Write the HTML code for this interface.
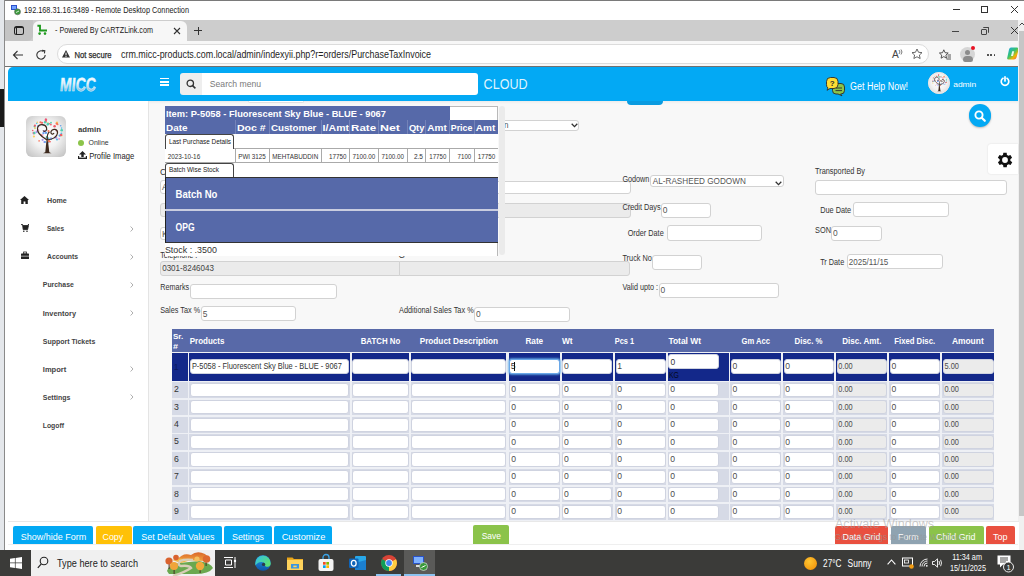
<!DOCTYPE html>
<html><head><meta charset="utf-8"><title>MICC</title><style>
*{box-sizing:border-box;margin:0;padding:0}
html,body{width:1024px;height:576px;overflow:hidden;background:#fff;font-family:"Liberation Sans",sans-serif;position:relative}
.a{position:absolute}
.t{position:absolute;white-space:nowrap;line-height:1;transform-origin:0 0}
svg{position:absolute;overflow:visible}
.tx{left:0;top:0;font-family:"Liberation Sans",sans-serif;pointer-events:none}
</style></head><body>
<div class="a" style="left:0px;top:0px;width:5.00px;height:576.00px;background:#e4e7eb"></div>
<div class="a" style="left:0px;top:89px;width:5.00px;height:38.00px;background:#1a1a1a"></div>
<div class="a" style="left:4px;top:0px;width:1.00px;height:550.00px;background:#8a8a8a"></div>
<div class="a" style="left:5px;top:0px;width:1019.00px;height:20.00px;background:#fff;border-top:1px solid #7a7a7a"></div>
<svg style="left:11px;top:5px" width="10" height="10" viewBox="0 0 10 10"><rect x="0" y="0" width="6" height="5" fill="#2b4fc9"/><rect x="1" y="1" width="4" height="3" fill="#6fa0ff"/><circle cx="6.5" cy="6.8" r="3" fill="#3a9a3a" stroke="#666" stroke-width=".6"/><path d="M5 7.5 L8 6" stroke="#fff" stroke-width=".8"/></svg>
<svg class="tx" width="1024" height="576" viewBox="0 0 1024 576"><text x="24.00" y="12.70" font-size="8.28" fill="#1a1a1a" textLength="165.00" lengthAdjust="spacingAndGlyphs">192.168.31.16:3489 - Remote Desktop Connection</text></svg>
<div class="a" style="left:953px;top:9px;width:7.00px;height:1.00px;background:#333"></div>
<div class="a" style="left:981px;top:6px;width:7.00px;height:7.00px;border:1px solid #333"></div>
<svg style="left:1011px;top:6px" width="7" height="7" viewBox="0 0 7 7"><path d="M0 0L7 7M7 0L0 7" stroke="#333" stroke-width="1"/></svg>
<div class="a" style="left:5px;top:20px;width:1014.00px;height:21.00px;background:#cdcdcd"></div>
<div class="a" style="left:5px;top:20px;width:28.00px;height:21.00px;background:#c4c4c4;border-radius:0 0 6px 0"></div>
<div class="a" style="left:33px;top:21px;width:154.00px;height:20.00px;background:#f7f7f7;border-radius:6px 6px 0 0"></div>
<div class="a" style="left:13.5px;top:26px;width:10.00px;height:9.00px;border:1.2px solid #222;border-top-width:2.2px;border-radius:2.5px"></div>
<div class="a" style="left:15.6px;top:28px;width:1.10px;height:6.00px;background:#222"></div>
<svg style="left:37px;top:24px" width="11" height="12" viewBox="0 0 11 12"><path d="M0.4 1.7H3V6.5H10" fill="none" stroke="#1f9a1f" stroke-width="1.9"/><circle cx="2.6" cy="9.6" r="1.3" fill="#1f9a1f"/><circle cx="8" cy="9.6" r="1.3" fill="#1f9a1f"/></svg>
<svg class="tx" width="1024" height="576" viewBox="0 0 1024 576"><text x="55.00" y="33.00" font-size="8.14" fill="#1a1a1a" textLength="98.00" lengthAdjust="spacingAndGlyphs">- Powered By CARTZLink.com</text></svg>
<svg style="left:174px;top:28px" width="6" height="6" viewBox="0 0 6 6"><path d="M0 0L6 6M6 0L0 6" stroke="#333" stroke-width="1.1"/></svg>
<div class="a" style="left:194px;top:30px;width:8.00px;height:1.00px;background:#333"></div>
<div class="a" style="left:197.5px;top:26.5px;width:1.00px;height:8.00px;background:#333"></div>
<div class="a" style="left:952px;top:31px;width:7.00px;height:1.00px;background:#444"></div>
<div class="a" style="left:981px;top:29px;width:6.00px;height:6.00px;border:1px solid #444;border-radius:1px"></div>
<div class="a" style="left:983px;top:27px;width:6.00px;height:6.00px;border-top:1px solid #444;border-right:1px solid #444;border-radius:1px"></div>
<svg style="left:1011px;top:27px" width="7" height="7" viewBox="0 0 7 7"><path d="M0 0L7 7M7 0L0 7" stroke="#333" stroke-width="1"/></svg>
<div class="a" style="left:5px;top:41px;width:1014.00px;height:25.00px;background:#f7f7f7"></div>
<div class="a" style="left:5px;top:66px;width:1013.00px;height:1.00px;background:#707070"></div>
<svg style="left:12px;top:50px" width="12" height="10" viewBox="0 0 12 10"><path d="M11 5H1.5M5.5 1L1.5 5L5.5 9" fill="none" stroke="#333" stroke-width="1.1"/></svg>
<svg style="left:35px;top:49px" width="12" height="12" viewBox="0 0 12 12"><path d="M10.2 6A4.2 4.2 0 1 1 8.5 2.6" fill="none" stroke="#333" stroke-width="1.1"/><path d="M7 1.2L9.8 1.6L9.4 4.4" fill="none" stroke="#333" stroke-width="1.1"/></svg>
<div class="a" style="left:57px;top:44px;width:872.00px;height:20.20px;background:#fff;border:1px solid #dcdcdc;border-radius:10px"></div>
<svg style="left:62px;top:49.5px" width="8" height="8" viewBox="0 0 8 8"><path d="M4 0L8 7.6H0Z" fill="#333"/><rect x="3.5" y="2.6" width="1" height="2.8" fill="#fff"/><rect x="3.5" y="6" width="1" height="0.9" fill="#fff"/></svg>
<svg class="tx" width="1024" height="576" viewBox="0 0 1024 576"><text x="74.50" y="58.00" font-size="9.16" fill="#2a2a2a" textLength="37.00" lengthAdjust="spacingAndGlyphs" stroke="#2a2a2a" stroke-width=".25">Not secure</text><text x="121.00" y="58.10" font-size="10.61" fill="#1e1e1e" textLength="310.00" lengthAdjust="spacingAndGlyphs">crm.micc-products.com.local/admin/indexyii.php?r=orders/PurchaseTaxInvoice</text><text x="892.00" y="58.00" font-size="10.17" fill="#444">A</text></svg>
<svg style="left:898px;top:49px" width="5" height="6" viewBox="0 0 5 6"><path d="M1 1Q3 3 1 5M3 0.5Q5 3 3 5.5" fill="none" stroke="#444" stroke-width=".7"/></svg>
<svg style="left:911px;top:48px" width="12" height="12" viewBox="0 0 24 24"><path d="M12 2l3 6.5 7 .8-5.2 4.8 1.5 7L12 17.5 5.7 21l1.5-7L2 9.3l7-.8z" fill="none" stroke="#444" stroke-width="1.6" stroke-linejoin="round"/></svg>
<svg style="left:939px;top:48.5px" width="12" height="11" viewBox="0 0 12 11"><path d="M4.8 0.8L6.1 3.7 9.2 4 6.9 6.1 7.5 9.2 4.8 7.6 2.1 9.2 2.7 6.1 0.4 4 3.5 3.7Z" fill="none" stroke="#444" stroke-width=".9" stroke-linejoin="round"/><path d="M8.5 6H12M8.5 8H12M7.5 10H12" stroke="#444" stroke-width=".9"/></svg>
<div class="a" style="left:960px;top:47px;width:15.00px;height:15.00px;background:#d6d6d6;border-radius:50%"></div>
<div class="a" style="left:965px;top:49.5px;width:5.00px;height:5.00px;background:#8c8c8c;border-radius:50%"></div>
<div class="a" style="left:962.5px;top:55.5px;width:10.00px;height:6.50px;background:#8c8c8c;border-radius:5px 5px 3px 3px"></div>
<div class="a" style="left:971px;top:46px;width:4.00px;height:4.00px;background:#e81123;border-radius:50%"></div>
<div class="a" style="left:987.0px;top:54px;width:1.60px;height:1.60px;background:#333;border-radius:50%"></div>
<div class="a" style="left:990.3px;top:54px;width:1.60px;height:1.60px;background:#333;border-radius:50%"></div>
<div class="a" style="left:993.6px;top:54px;width:1.60px;height:1.60px;background:#333;border-radius:50%"></div>
<svg style="left:1007px;top:47px" width="12" height="13" viewBox="0 0 12 13"><defs><linearGradient id="cp1" x1="0" y1="0" x2="1" y2="1"><stop offset="0" stop-color="#1fa0f0"/><stop offset=".45" stop-color="#36c46a"/><stop offset=".7" stop-color="#f4b400"/><stop offset="1" stop-color="#e8367a"/></linearGradient></defs><path d="M4 0.5H10Q12 0.5 11.5 3L9.5 10.5Q9 12.5 7 12.5H1.5Q-0.3 12.5 0.3 10.5L2 2.5Q2.5 0.5 4 0.5Z" fill="url(#cp1)"/><path d="M5.2 4.2H7.2L6 9H4Z" fill="#fff" opacity=".9"/></svg>
<div class="a" style="left:1018px;top:20px;width:6.00px;height:530.00px;background:#f0f0f0"></div>
<div class="a" style="left:1019px;top:31px;width:5.00px;height:484.50px;background:#c6c6c6"></div>
<svg style="left:1019px;top:22px" width="5" height="5" viewBox="0 0 5 5"><path d="M0.5 3.5L3 1L5.5 3.5" fill="none" stroke="#444" stroke-width="1"/></svg>
<div class="a" style="left:8px;top:67px;width:1010.00px;height:34.00px;background:#03a9f4;border-radius:5px 0 0 0"></div>
<svg style="left:0;top:0" width="1024" height="576" class="tx"><defs><linearGradient id="mg" x1="0" y1="0" x2="0" y2="1"><stop offset="0" stop-color="#ffffff"/><stop offset=".45" stop-color="#e6f4fb"/><stop offset="1" stop-color="#4fa6d3"/></linearGradient></defs><text x="59.5" y="90.8" font-size="19" font-weight="bold" textLength="36" lengthAdjust="spacingAndGlyphs" fill="url(#mg)" stroke="#dff2fb" stroke-width=".5" transform="translate(0 90.8) skewX(-5) translate(0 -90.8)" style="font-family:Liberation Sans">MICC</text></svg>
<div class="a" style="left:160px;top:78.2px;width:9.00px;height:1.30px;background:#fff"></div>
<div class="a" style="left:160px;top:81.3px;width:9.00px;height:1.30px;background:#fff"></div>
<div class="a" style="left:160px;top:84.4px;width:9.00px;height:1.30px;background:#fff"></div>
<div class="a" style="left:180px;top:72.5px;width:22.00px;height:22.50px;background:#eeeeee;border-radius:3px 0 0 3px"></div>
<svg style="left:186px;top:79px" width="10" height="10" viewBox="0 0 10 10"><circle cx="4.3" cy="4.3" r="3.2" fill="none" stroke="#333" stroke-width="1.3"/><path d="M6.6 6.6L9.4 9.4" stroke="#333" stroke-width="1.5"/></svg>
<div class="a" style="left:202px;top:72.5px;width:276.30px;height:22.50px;background:#fff;border-radius:0 3px 3px 0"></div>
<svg class="tx" width="1024" height="576" viewBox="0 0 1024 576"><text x="209.80" y="86.70" font-size="9.16" fill="#7a7a7a" textLength="51.30" lengthAdjust="spacingAndGlyphs">Search menu</text><text x="483.60" y="89.00" font-size="14.24" fill="#dff3fd" textLength="43.99" lengthAdjust="spacingAndGlyphs">CLOUD</text></svg>
<svg style="left:826px;top:77px" width="19" height="19" viewBox="0 0 19 19"><path d="M10 6.5h5a3.5 3.5 0 0 1 3.5 3.5v3.5a3.5 3.5 0 0 1-3.5 3.5h-0.5l1.5 1.8-4-1.8H10a3.5 3.5 0 0 1-3.5-3.5V10A3.5 3.5 0 0 1 10 6.5z" fill="#8bc34a" stroke="#2b2b2b" stroke-width=".9"/><path d="M9.5 11h6.5M9.5 13.6h6.5" stroke="#2b2b2b" stroke-width=".9"/><path d="M4.5 0.5h3.5a4 4 0 0 1 4 4v3a4 4 0 0 1-4 4H4l-3 1.8 1-2.3A4 4 0 0 1 0.5 7.5v-3a4 4 0 0 1 4-4z" fill="#ffdd33" stroke="#2b2b2b" stroke-width=".9"/><text x="6.2" y="9" font-size="8" font-weight="bold" text-anchor="middle" fill="#2b2b2b" font-family="Liberation Sans">?</text></svg>
<svg class="tx" width="1024" height="576" viewBox="0 0 1024 576"><text x="850.10" y="90.00" font-size="10.61" fill="#fff" textLength="58.00" lengthAdjust="spacingAndGlyphs">Get Help Now!</text></svg>
<div class="a" style="left:927.5px;top:72.3px;width:22.00px;height:22.00px;background:#f2f2f2;border-radius:50%;border:1px solid #c9c9c9"></div>
<svg class="tx" width="1024" height="576" viewBox="0 0 1024 576"><text x="953.20" y="86.80" font-size="7.56" fill="#fff" textLength="23.00" lengthAdjust="spacingAndGlyphs">admin</text></svg>
<svg style="left:1000px;top:75.5px" width="10" height="10" viewBox="0 0 10 10"><path d="M3 2.3A3.8 3.8 0 1 0 7 2.3" fill="none" stroke="#fff" stroke-width="1.7" stroke-linecap="round"/><path d="M5 0.8V5" stroke="#fff" stroke-width="1.7" stroke-linecap="round"/></svg>
<div class="a" style="left:8px;top:101px;width:141.00px;height:420.00px;background:#fff;border-right:1px solid #e4e4e4"></div>
<div class="a" style="left:149px;top:101px;width:869.00px;height:420.00px;background:#f8f8f8"></div>
<div class="a" style="left:149px;top:101px;width:869.00px;height:3.00px;background:linear-gradient(rgba(0,0,0,.05),rgba(0,0,0,0))"></div>
<div class="a" style="left:8px;top:521px;width:1011.00px;height:29.00px;background:#fff;border-top:1px solid #e8e8e8"></div>
<div class="a" style="left:0px;top:550px;width:1024.00px;height:26.00px;background:#3b3b39"></div>
<div class="a" style="left:25.6px;top:116px;width:40.7px;height:40.7px;border-radius:6px;background:radial-gradient(circle at 50% 45%,#ffffff 0%,#f2f2f2 45%,#bdbdbd 100%)"></div>
<svg style="left:25.6px;top:116px" width="41" height="41" viewBox="0 0 41 41"><g opacity=".95"><circle cx="16.0" cy="6.8" r="1.1" fill="#ed5565"/><circle cx="24.1" cy="25.7" r="0.8" fill="#ed5565"/><circle cx="19.4" cy="4.7" r="0.8" fill="#ec87c0"/><circle cx="7.8" cy="17.1" r="1.3" fill="#e94e77"/><circle cx="35.4" cy="17.4" r="0.9" fill="#4fc1e9"/><circle cx="15.0" cy="6.6" r="0.8" fill="#fc6e51"/><circle cx="23.7" cy="7.7" r="0.8" fill="#ed5565"/><circle cx="22.5" cy="22.4" r="1.0" fill="#ffce54"/><circle cx="17.2" cy="9.2" r="0.8" fill="#4fc1e9"/><circle cx="8.5" cy="10.5" r="1.0" fill="#48cfad"/><circle cx="28.6" cy="10.2" r="1.3" fill="#ed5565"/><circle cx="21.9" cy="7.1" r="0.9" fill="#ffce54"/><circle cx="8.4" cy="17.0" r="1.2" fill="#48cfad"/><circle cx="8.9" cy="9.7" r="1.1" fill="#ed5565"/><circle cx="7.9" cy="20.5" r="1.1" fill="#ffce54"/><circle cx="6.7" cy="14.5" r="0.8" fill="#ed5565"/><circle cx="21.3" cy="8.5" r="0.9" fill="#4fc1e9"/><circle cx="18.3" cy="25.9" r="1.0" fill="#ac92ec"/><circle cx="19.9" cy="16.7" r="1.2" fill="#5d9cec"/><circle cx="10.7" cy="7.4" r="0.8" fill="#4fc1e9"/><circle cx="11.7" cy="10.0" r="0.8" fill="#5d9cec"/><circle cx="17.4" cy="17.2" r="1.1" fill="#5d9cec"/><circle cx="35.5" cy="19.4" r="1.1" fill="#ffce54"/><circle cx="33.1" cy="22.9" r="0.9" fill="#ec87c0"/><circle cx="19.7" cy="5.7" r="1.1" fill="#ed5565"/><circle cx="9.1" cy="12.1" r="0.7" fill="#4fc1e9"/><circle cx="25.0" cy="6.7" r="0.9" fill="#48cfad"/><circle cx="29.2" cy="21.5" r="1.0" fill="#ac92ec"/><circle cx="22.0" cy="8.1" r="1.3" fill="#48cfad"/><circle cx="10.5" cy="16.6" r="0.7" fill="#5d9cec"/><circle cx="15.2" cy="19.1" r="0.8" fill="#fc6e51"/><circle cx="22.1" cy="25.7" r="0.9" fill="#4fc1e9"/><circle cx="22.5" cy="22.5" r="0.9" fill="#4fc1e9"/><circle cx="25.0" cy="22.7" r="1.2" fill="#4fc1e9"/><circle cx="31.0" cy="23.5" r="1.1" fill="#4fc1e9"/><circle cx="12.2" cy="15.3" r="1.1" fill="#a0d468"/><circle cx="30.5" cy="14.8" r="0.8" fill="#e94e77"/><circle cx="35.7" cy="14.2" r="1.3" fill="#48cfad"/><circle cx="35.6" cy="12.1" r="0.8" fill="#4fc1e9"/><circle cx="16.7" cy="19.1" r="0.8" fill="#ec87c0"/><circle cx="30.3" cy="21.8" r="1.0" fill="#ac92ec"/><circle cx="20.4" cy="21.6" r="0.8" fill="#ac92ec"/><circle cx="11.3" cy="6.2" r="0.8" fill="#ffce54"/><circle cx="31.0" cy="6.7" r="1.2" fill="#ffce54"/><circle cx="22.3" cy="26.3" r="1.0" fill="#4fc1e9"/><circle cx="31.6" cy="8.3" r="0.9" fill="#fc6e51"/><circle cx="21.5" cy="22.1" r="0.9" fill="#5d9cec"/><circle cx="19.0" cy="6.3" r="1.2" fill="#48cfad"/><circle cx="33.8" cy="19.6" r="1.2" fill="#5d9cec"/><circle cx="19.0" cy="25.9" r="1.0" fill="#5d9cec"/><circle cx="10.7" cy="15.8" r="1.2" fill="#ac92ec"/><circle cx="24.9" cy="22.4" r="0.8" fill="#ac92ec"/><circle cx="20.7" cy="21.1" r="1.0" fill="#48cfad"/><circle cx="20.0" cy="3.7" r="1.2" fill="#ed5565"/><circle cx="22.5" cy="15.0" r="1.1" fill="#fc6e51"/><circle cx="12.3" cy="14.2" r="0.9" fill="#ec87c0"/><circle cx="19.7" cy="4.8" r="0.8" fill="#ed5565"/><circle cx="12.6" cy="10.6" r="0.8" fill="#ac92ec"/><circle cx="35.1" cy="19.1" r="0.9" fill="#fc6e51"/><circle cx="18.3" cy="15.2" r="1.2" fill="#ac92ec"/><circle cx="8.9" cy="12.1" r="0.9" fill="#ffce54"/><circle cx="19.7" cy="3.5" r="0.9" fill="#e94e77"/><circle cx="13.1" cy="24.9" r="0.8" fill="#fc6e51"/><circle cx="14.4" cy="6.2" r="1.0" fill="#fc6e51"/><circle cx="30.8" cy="7.6" r="1.2" fill="#fc6e51"/><circle cx="35.1" cy="18.9" r="1.2" fill="#ed5565"/><circle cx="24.9" cy="8.6" r="0.9" fill="#ed5565"/><circle cx="34.7" cy="9.7" r="0.8" fill="#5d9cec"/><circle cx="22.9" cy="25.2" r="1.3" fill="#fc6e51"/><circle cx="16.6" cy="23.8" r="1.1" fill="#ac92ec"/></g>
<path d="M19.2 37 L20.2 27 L21 22 L22.2 27 L23.4 37 Z" fill="#3e2a1e"/>
<path d="M21 24 C16 21 10.5 17 11.5 12 C12.5 7.5 19 7.5 20.5 11.5 C21.5 14.5 18.5 16.5 17 14.5 M21 24 C25 23.5 31 21.5 31.5 17 C32 13 26.5 12 25 15.5 C24.2 18 27 19 28 17 M21.3 24 C21 20 21.5 17 23.5 16" fill="none" stroke="#3e2a1e" stroke-width="1.2"/>
<path d="M17 37.2 Q21 35 25.5 37.2 Z" fill="#3e2a1e"/></svg>
<svg class="tx" width="1024" height="576" viewBox="0 0 1024 576"><text x="78.00" y="132.30" font-size="7.56" fill="#3a3a3a" font-weight="bold" textLength="23.00" lengthAdjust="spacingAndGlyphs">admin</text></svg>
<div class="a" style="left:78.2px;top:139.6px;width:6.00px;height:6.00px;background:#8cc44a;border-radius:50%"></div>
<svg class="tx" width="1024" height="576" viewBox="0 0 1024 576"><text x="88.60" y="145.20" font-size="7.27" fill="#333" textLength="20.00" lengthAdjust="spacingAndGlyphs">Online</text></svg>
<svg style="left:78px;top:151px" width="9" height="8" viewBox="0 0 9 8"><path d="M4.5 0L8 3.5H5.7V6H3.3V3.5H1Z" fill="#222"/><rect x="0" y="6.6" width="9" height="1.4" fill="#222"/><rect x="0" y="5" width="1.2" height="3" fill="#222"/><rect x="7.8" y="5" width="1.2" height="3" fill="#222"/></svg>
<svg class="tx" width="1024" height="576" viewBox="0 0 1024 576"><text x="89.20" y="158.70" font-size="8.58" fill="#222" textLength="45.00" lengthAdjust="spacingAndGlyphs">Profile Image</text></svg>
<svg style="left:20.2px;top:195.6px" width="9" height="8" viewBox="0 0 9 8"><path d="M4.5 0L9 4H7.8V8H5.4V5.6H3.6V8H1.2V4H0Z" fill="#222"/></svg>
<svg style="left:21px;top:224.4px" width="8" height="8" viewBox="0 0 8 8"><path d="M0 0.6H1.6L2.2 5.6H6.6L7.4 1.6H2" fill="#222" stroke="#222" stroke-width=".9"/><path d="M7.6 0L7 1.6" stroke="#222" stroke-width="1"/><circle cx="2.8" cy="7.2" r=".8" fill="#222"/><circle cx="6" cy="7.2" r=".8" fill="#222"/></svg>
<svg style="left:21px;top:252.2px" width="8" height="7" viewBox="0 0 8 7"><rect x="0" y="1.6" width="8" height="5.4" rx=".6" fill="#222"/><rect x="2.6" y="0" width="2.8" height="2" fill="none" stroke="#222" stroke-width=".8"/><rect x="0" y="3.8" width="8" height=".6" fill="#fff"/></svg>
<svg class="tx" width="1024" height="576" viewBox="0 0 1024 576"><text x="47.00" y="203.10" font-size="7.85" fill="#444" font-weight="bold" textLength="19.80" lengthAdjust="spacingAndGlyphs">Home</text><text x="47.00" y="231.20" font-size="7.85" fill="#444" font-weight="bold" textLength="17.00" lengthAdjust="spacingAndGlyphs">Sales</text></svg>
<svg style="left:129.5px;top:225.5px" width="4" height="6" viewBox="0 0 4 6"><path d="M0.6 0.5L3 3L0.6 5.5" fill="none" stroke="#999" stroke-width=".8"/></svg>
<svg class="tx" width="1024" height="576" viewBox="0 0 1024 576"><text x="47.00" y="259.30" font-size="7.85" fill="#444" font-weight="bold" textLength="31.00" lengthAdjust="spacingAndGlyphs">Accounts</text></svg>
<svg style="left:129.5px;top:253.6px" width="4" height="6" viewBox="0 0 4 6"><path d="M0.6 0.5L3 3L0.6 5.5" fill="none" stroke="#999" stroke-width=".8"/></svg>
<svg class="tx" width="1024" height="576" viewBox="0 0 1024 576"><text x="42.80" y="287.40" font-size="7.85" fill="#444" font-weight="bold" textLength="31.00" lengthAdjust="spacingAndGlyphs">Purchase</text></svg>
<svg style="left:129.5px;top:281.7px" width="4" height="6" viewBox="0 0 4 6"><path d="M0.6 0.5L3 3L0.6 5.5" fill="none" stroke="#999" stroke-width=".8"/></svg>
<svg class="tx" width="1024" height="576" viewBox="0 0 1024 576"><text x="42.80" y="315.50" font-size="7.85" fill="#444" font-weight="bold" textLength="33.20" lengthAdjust="spacingAndGlyphs">Inventory</text></svg>
<svg style="left:129.5px;top:309.8px" width="4" height="6" viewBox="0 0 4 6"><path d="M0.6 0.5L3 3L0.6 5.5" fill="none" stroke="#999" stroke-width=".8"/></svg>
<svg class="tx" width="1024" height="576" viewBox="0 0 1024 576"><text x="42.80" y="343.60" font-size="7.85" fill="#444" font-weight="bold" textLength="52.50" lengthAdjust="spacingAndGlyphs">Support Tickets</text><text x="42.80" y="371.80" font-size="7.85" fill="#444" font-weight="bold" textLength="23.50" lengthAdjust="spacingAndGlyphs">Import</text></svg>
<svg style="left:129.5px;top:366.1px" width="4" height="6" viewBox="0 0 4 6"><path d="M0.6 0.5L3 3L0.6 5.5" fill="none" stroke="#999" stroke-width=".8"/></svg>
<svg class="tx" width="1024" height="576" viewBox="0 0 1024 576"><text x="42.80" y="399.90" font-size="7.85" fill="#444" font-weight="bold" textLength="27.50" lengthAdjust="spacingAndGlyphs">Settings</text></svg>
<svg style="left:129.5px;top:394.2px" width="4" height="6" viewBox="0 0 4 6"><path d="M0.6 0.5L3 3L0.6 5.5" fill="none" stroke="#999" stroke-width=".8"/></svg>
<svg class="tx" width="1024" height="576" viewBox="0 0 1024 576"><text x="42.80" y="428.00" font-size="7.85" fill="#444" font-weight="bold" textLength="21.19" lengthAdjust="spacingAndGlyphs">Logoff</text></svg>
<div class="a" style="left:247.5px;top:101px;width:56.50px;height:2.00px;background:#fff;border:1px solid #e0e0e0;border-top:none;border-radius:0 0 4px 4px"></div>
<div class="a" style="left:627.2px;top:101px;width:36.20px;height:3.50px;background:#0a9be0;border-radius:0 0 4px 4px"></div>
<svg class="tx" width="1024" height="576" viewBox="0 0 1024 576"><text x="160.00" y="174.50" font-size="8.72" fill="#333">C</text></svg>
<div class="a" style="left:160px;top:179.8px;width:239.00px;height:14.60px;background:#fff;border:1px solid #d2d2d2;border-radius:3px;"></div>
<svg class="tx" width="1024" height="576" viewBox="0 0 1024 576"><text x="162.00" y="190.00" font-size="8.72" fill="#555">A</text></svg>
<div class="a" style="left:160px;top:202.7px;width:239.00px;height:14.60px;background:#ebebeb;border:1px solid #d2d2d2;border-radius:3px;"></div>
<div class="a" style="left:160px;top:226.7px;width:239.00px;height:13.50px;background:#fff;border:1px solid #d2d2d2;border-radius:3px;"></div>
<svg class="tx" width="1024" height="576" viewBox="0 0 1024 576"><text x="162.00" y="236.50" font-size="8.72" fill="#555">K</text><text x="160.20" y="258.00" font-size="8.72" fill="#333" textLength="37.00" lengthAdjust="spacingAndGlyphs">Telephone :</text></svg>
<div class="a" style="left:160.2px;top:260.6px;width:239.60px;height:15.00px;background:#ebebeb;border:1px solid #d2d2d2;border-radius:3px;border-radius:3px 0 0 3px"></div>
<svg class="tx" width="1024" height="576" viewBox="0 0 1024 576"><text x="162.20" y="270.80" font-size="9.01" fill="#444" textLength="51.80" lengthAdjust="spacingAndGlyphs">0301-8246043</text></svg>
<div class="a" style="left:399.3px;top:260.6px;width:231.20px;height:15.00px;background:#ebebeb;border:1px solid #d2d2d2;border-radius:3px;border-radius:0 3px 3px 0"></div>
<svg class="tx" width="1024" height="576" viewBox="0 0 1024 576"><text x="398.50" y="258.00" font-size="8.72" fill="#333">C</text><text x="160.20" y="289.70" font-size="8.14" fill="#333" textLength="29.00" lengthAdjust="spacingAndGlyphs">Remarks</text></svg>
<div class="a" style="left:189.8px;top:283.75px;width:147.70px;height:14.85px;background:#fff;border:1px solid #d2d2d2;border-radius:3px;"></div>
<svg class="tx" width="1024" height="576" viewBox="0 0 1024 576"><text x="160.20" y="313.00" font-size="8.43" fill="#333" textLength="40.00" lengthAdjust="spacingAndGlyphs">Sales Tax %</text></svg>
<div class="a" style="left:200.8px;top:306.4px;width:95.20px;height:14.85px;background:#fff;border:1px solid #d2d2d2;border-radius:3px;"></div>
<svg class="tx" width="1024" height="576" viewBox="0 0 1024 576"><text x="202.80" y="316.60" font-size="8.43" fill="#555">5</text></svg>
<div class="a" style="left:500px;top:119.7px;width:79.40px;height:11.10px;background:#fff;border:1px solid #d2d2d2;border-radius:3px;"></div>
<svg class="tx" width="1024" height="576" viewBox="0 0 1024 576"><text x="504.00" y="128.00" font-size="8.14" fill="#555">n</text></svg>
<svg style="left:571px;top:123px" width="7" height="5" viewBox="0 0 7 5"><path d="M0.7 0.7L3.5 3.6L6.3 0.7" fill="none" stroke="#333" stroke-width="1.3"/></svg>
<div class="a" style="left:399px;top:180.5px;width:231.50px;height:13.50px;background:#fff;border:1px solid #d2d2d2;border-radius:3px;"></div>
<div class="a" style="left:399px;top:202.8px;width:231.50px;height:14.90px;background:#ebebeb;border:1px solid #d2d2d2;border-radius:3px;"></div>
<svg class="tx" width="1024" height="576" viewBox="0 0 1024 576"><text x="399.00" y="313.00" font-size="8.43" fill="#333" textLength="74.70" lengthAdjust="spacingAndGlyphs">Additional Sales Tax %</text></svg>
<div class="a" style="left:473.7px;top:306.6px;width:96.00px;height:15.40px;background:#fff;border:1px solid #d2d2d2;border-radius:3px;"></div>
<svg class="tx" width="1024" height="576" viewBox="0 0 1024 576"><text x="476.00" y="317.10" font-size="8.43" fill="#555">0</text><text x="622.40" y="182.00" font-size="8.58" fill="#333" textLength="27.00" lengthAdjust="spacingAndGlyphs">Godown</text></svg>
<div class="a" style="left:650.1px;top:175.2px;width:133.60px;height:12.30px;background:#fff;border:1px solid #d2d2d2;border-radius:3px;"></div>
<svg class="tx" width="1024" height="576" viewBox="0 0 1024 576"><text x="652.80" y="184.30" font-size="8.87" fill="#555" textLength="93.00" lengthAdjust="spacingAndGlyphs">AL-RASHEED GODOWN</text></svg>
<svg style="left:775px;top:180.5px" width="7" height="5" viewBox="0 0 7 5"><path d="M0.7 0.7L3.5 3.6L6.3 0.7" fill="none" stroke="#333" stroke-width="1.3"/></svg>
<svg class="tx" width="1024" height="576" viewBox="0 0 1024 576"><text x="622.40" y="209.80" font-size="8.58" fill="#333" textLength="38.30" lengthAdjust="spacingAndGlyphs">Credit Days</text></svg>
<div class="a" style="left:660.7px;top:203.3px;width:50.60px;height:14.40px;background:#fff;border:1px solid #d2d2d2;border-radius:3px;"></div>
<svg class="tx" width="1024" height="576" viewBox="0 0 1024 576"><text x="662.80" y="212.80" font-size="8.43" fill="#555">0</text><text x="627.70" y="235.80" font-size="8.58" fill="#333" textLength="36.00" lengthAdjust="spacingAndGlyphs">Order Date</text></svg>
<div class="a" style="left:666.5px;top:225.3px;width:95.20px;height:15.30px;background:#fff;border:1px solid #d2d2d2;border-radius:3px;"></div>
<svg class="tx" width="1024" height="576" viewBox="0 0 1024 576"><text x="622.40" y="261.20" font-size="8.58" fill="#333" textLength="29.50" lengthAdjust="spacingAndGlyphs">Truck No</text></svg>
<div class="a" style="left:651.6px;top:254.7px;width:50.90px;height:14.90px;background:#fff;border:1px solid #d2d2d2;border-radius:3px;"></div>
<svg class="tx" width="1024" height="576" viewBox="0 0 1024 576"><text x="622.40" y="290.30" font-size="8.58" fill="#333" textLength="35.60" lengthAdjust="spacingAndGlyphs">Valid upto :</text></svg>
<div class="a" style="left:658.6px;top:283.3px;width:120.70px;height:15.00px;background:#fff;border:1px solid #d2d2d2;border-radius:3px;"></div>
<svg class="tx" width="1024" height="576" viewBox="0 0 1024 576"><text x="660.50" y="293.30" font-size="8.43" fill="#555">0</text><text x="815.00" y="174.20" font-size="8.58" fill="#333" textLength="50.00" lengthAdjust="spacingAndGlyphs">Transported By</text></svg>
<div class="a" style="left:814.8px;top:180.2px;width:191.90px;height:14.60px;background:#fff;border:1px solid #d2d2d2;border-radius:3px;"></div>
<svg class="tx" width="1024" height="576" viewBox="0 0 1024 576"><text x="820.20" y="213.10" font-size="8.58" fill="#333" textLength="31.00" lengthAdjust="spacingAndGlyphs">Due Date</text></svg>
<div class="a" style="left:853.3px;top:202.3px;width:95.45px;height:15.00px;background:#fff;border:1px solid #d2d2d2;border-radius:3px;"></div>
<svg class="tx" width="1024" height="576" viewBox="0 0 1024 576"><text x="815.00" y="232.90" font-size="8.58" fill="#333" textLength="16.00" lengthAdjust="spacingAndGlyphs">SON</text></svg>
<div class="a" style="left:831px;top:226.25px;width:50.70px;height:14.55px;background:#fff;border:1px solid #d2d2d2;border-radius:3px;"></div>
<svg class="tx" width="1024" height="576" viewBox="0 0 1024 576"><text x="833.00" y="236.00" font-size="8.43" fill="#555">0</text><text x="820.20" y="264.60" font-size="8.58" fill="#333" textLength="24.00" lengthAdjust="spacingAndGlyphs">Tr Date</text></svg>
<div class="a" style="left:847px;top:254.4px;width:95.50px;height:15.00px;background:#fff;border:1px solid #d2d2d2;border-radius:3px;"></div>
<svg class="tx" width="1024" height="576" viewBox="0 0 1024 576"><text x="848.75" y="264.60" font-size="8.72" fill="#555" textLength="39.60" lengthAdjust="spacingAndGlyphs">2025/11/15</text></svg>
<div class="a" style="left:968.5px;top:104px;width:22.50px;height:22.50px;background:#03a9f4;border-radius:50%;box-shadow:0 1px 2px rgba(0,0,0,.25)"></div>
<svg style="left:974px;top:109.5px" width="12" height="12" viewBox="0 0 12 12"><circle cx="5" cy="5" r="3.6" fill="none" stroke="#fff" stroke-width="1.9"/><path d="M7.7 7.7L10.8 10.8" stroke="#fff" stroke-width="2.2" stroke-linecap="round"/></svg>
<div class="a" style="left:988px;top:144px;width:30.00px;height:29.50px;background:#fff;border-radius:3px 0 0 3px;box-shadow:0 0 2px rgba(0,0,0,.12)"></div>
<svg style="left:994.5px;top:149.5px" width="20" height="20" viewBox="0 0 24 24"><path fill="#111" d="M19.4 13a7.8 7.8 0 0 0 0-2l2.1-1.6-2-3.5-2.5 1a7.6 7.6 0 0 0-1.7-1L15 3.2h-4l-.4 2.7a7.6 7.6 0 0 0-1.7 1l-2.5-1-2 3.5L6.6 11a7.8 7.8 0 0 0 0 2l-2.1 1.6 2 3.5 2.5-1a7.6 7.6 0 0 0 1.7 1l.4 2.7h4l.4-2.7a7.6 7.6 0 0 0 1.7-1l2.5 1 2-3.5zM13 15.5a3.5 3.5 0 1 1 0-7 3.5 3.5 0 0 1 0 7z" transform="translate(-1 0)"/></svg>
<div class="a" style="left:164.5px;top:106px;width:333.70px;height:150.00px;background:#fff;border:1px solid #b9b9b9;border-bottom:none;border-left-color:#fff"></div>
<div class="a" style="left:499px;top:106px;width:6.00px;height:149.00px;background:#ebebeb;border-radius:3px"></div>
<div class="a" style="left:165px;top:106px;width:284.50px;height:14.00px;background:#5669a9"></div>
<div class="a" style="left:165px;top:120px;width:333.00px;height:14.00px;background:#5669a9"></div>
<svg class="tx" width="1024" height="576" viewBox="0 0 1024 576"><text x="165.90" y="116.60" font-size="9.45" fill="#fff" font-weight="bold" textLength="220.00" lengthAdjust="spacingAndGlyphs">Item: P-5058 - Fluorescent Sky Blue - BLUE - 9067</text><text x="166.10" y="130.50" font-size="8.43" fill="#fff" font-weight="bold" textLength="21.50" lengthAdjust="spacingAndGlyphs">Date</text></svg>
<div class="a" style="left:234.8px;top:120px;width:1.00px;height:14.00px;background:#7483b8"></div>
<svg class="tx" width="1024" height="576" viewBox="0 0 1024 576"><text x="236.90" y="130.50" font-size="8.43" fill="#fff" font-weight="bold" textLength="28.80" lengthAdjust="spacingAndGlyphs">Doc #</text></svg>
<div class="a" style="left:268.8px;top:120px;width:1.00px;height:14.00px;background:#7483b8"></div>
<svg class="tx" width="1024" height="576" viewBox="0 0 1024 576"><text x="270.90" y="130.50" font-size="8.43" fill="#fff" font-weight="bold" textLength="45.50" lengthAdjust="spacingAndGlyphs">Customer</text></svg>
<div class="a" style="left:320.5px;top:120px;width:1.00px;height:14.00px;background:#7483b8"></div>
<svg class="tx" width="1024" height="576" viewBox="0 0 1024 576"><text x="322.60" y="130.50" font-size="8.43" fill="#fff" font-weight="bold" textLength="26.50" lengthAdjust="spacingAndGlyphs">I/Amt</text></svg>
<div class="a" style="left:349.0px;top:120px;width:1.00px;height:14.00px;background:#7483b8"></div>
<svg class="tx" width="1024" height="576" viewBox="0 0 1024 576"><text x="351.10" y="130.50" font-size="8.43" fill="#fff" font-weight="bold" textLength="24.99" lengthAdjust="spacingAndGlyphs">Rate</text></svg>
<div class="a" style="left:377.9px;top:120px;width:1.00px;height:14.00px;background:#7483b8"></div>
<svg class="tx" width="1024" height="576" viewBox="0 0 1024 576"><text x="380.00" y="130.50" font-size="8.43" fill="#fff" font-weight="bold" textLength="20.00" lengthAdjust="spacingAndGlyphs">Net</text></svg>
<div class="a" style="left:406.8px;top:120px;width:1.00px;height:14.00px;background:#7483b8"></div>
<svg class="tx" width="1024" height="576" viewBox="0 0 1024 576"><text x="408.90" y="130.50" font-size="8.43" fill="#fff" font-weight="bold" textLength="15.50" lengthAdjust="spacingAndGlyphs">Qty</text></svg>
<div class="a" style="left:425.2px;top:120px;width:1.00px;height:14.00px;background:#7483b8"></div>
<svg class="tx" width="1024" height="576" viewBox="0 0 1024 576"><text x="427.30" y="130.50" font-size="8.43" fill="#fff" font-weight="bold" textLength="19.50" lengthAdjust="spacingAndGlyphs">Amt</text></svg>
<div class="a" style="left:448.7px;top:120px;width:1.00px;height:14.00px;background:#7483b8"></div>
<svg class="tx" width="1024" height="576" viewBox="0 0 1024 576"><text x="450.80" y="130.50" font-size="8.43" fill="#fff" font-weight="bold" textLength="21.50" lengthAdjust="spacingAndGlyphs">Price</text></svg>
<div class="a" style="left:473.7px;top:120px;width:1.00px;height:14.00px;background:#7483b8"></div>
<svg class="tx" width="1024" height="576" viewBox="0 0 1024 576"><text x="475.80" y="130.50" font-size="8.43" fill="#fff" font-weight="bold" textLength="19.50" lengthAdjust="spacingAndGlyphs">Amt</text></svg>
<div class="a" style="left:165px;top:134px;width:333.00px;height:15.00px;background:#fff;border-bottom:1px solid #aaa"></div>
<div class="a" style="left:165.4px;top:134.3px;width:69.00px;height:14.30px;background:#fff;border:1px solid #444;border-bottom:none;border-radius:3px 3px 0 0;border-width:1.5px 1px 0 1px"></div>
<svg class="tx" width="1024" height="576" viewBox="0 0 1024 576"><text x="168.90" y="143.75" font-size="6.40" fill="#222">Last Purchase Details</text></svg>
<div class="a" style="left:165px;top:149px;width:333.00px;height:13.50px;background:#fff;border-bottom:1px solid #aaa"></div>
<svg class="tx" width="1024" height="576" viewBox="0 0 1024 576"><text x="167.70" y="158.50" font-size="7.27" fill="#333" textLength="32.50" lengthAdjust="spacingAndGlyphs">2023-10-16</text></svg>
<div class="a" style="left:234.8px;top:149px;width:1.00px;height:13.50px;background:#aaa"></div>
<svg class="tx" width="1024" height="576" viewBox="0 0 1024 576"><text x="238.25" y="158.50" font-size="7.27" fill="#333" textLength="27.40" lengthAdjust="spacingAndGlyphs">PWI 3125</text></svg>
<div class="a" style="left:268.8px;top:149px;width:1.00px;height:13.50px;background:#aaa"></div>
<svg class="tx" width="1024" height="576" viewBox="0 0 1024 576"><text x="272.30" y="158.50" font-size="7.27" fill="#333" textLength="45.90" lengthAdjust="spacingAndGlyphs">MEHTABUDDIN</text></svg>
<div class="a" style="left:320.5px;top:149px;width:1.00px;height:13.50px;background:#aaa"></div>
<svg class="tx" width="1024" height="576" viewBox="0 0 1024 576"><text x="329.10" y="158.50" font-size="7.27" fill="#333" textLength="17.50" lengthAdjust="spacingAndGlyphs">17750</text></svg>
<div class="a" style="left:349.0px;top:149px;width:1.00px;height:13.50px;background:#aaa"></div>
<svg class="tx" width="1024" height="576" viewBox="0 0 1024 576"><text x="352.40" y="158.50" font-size="7.27" fill="#333" textLength="22.80" lengthAdjust="spacingAndGlyphs">7100.00</text></svg>
<div class="a" style="left:377.9px;top:149px;width:1.00px;height:13.50px;background:#aaa"></div>
<svg class="tx" width="1024" height="576" viewBox="0 0 1024 576"><text x="381.50" y="158.50" font-size="7.27" fill="#333" textLength="22.40" lengthAdjust="spacingAndGlyphs">7100.00</text></svg>
<div class="a" style="left:406.8px;top:149px;width:1.00px;height:13.50px;background:#aaa"></div>
<svg class="tx" width="1024" height="576" viewBox="0 0 1024 576"><text x="413.90" y="158.50" font-size="7.27" fill="#333" textLength="9.10" lengthAdjust="spacingAndGlyphs">2.5</text></svg>
<div class="a" style="left:425.2px;top:149px;width:1.00px;height:13.50px;background:#aaa"></div>
<svg class="tx" width="1024" height="576" viewBox="0 0 1024 576"><text x="429.30" y="158.50" font-size="7.27" fill="#333" textLength="17.00" lengthAdjust="spacingAndGlyphs">17750</text></svg>
<div class="a" style="left:448.7px;top:149px;width:1.00px;height:13.50px;background:#aaa"></div>
<svg class="tx" width="1024" height="576" viewBox="0 0 1024 576"><text x="457.60" y="158.50" font-size="7.27" fill="#333" textLength="13.60" lengthAdjust="spacingAndGlyphs">7100</text></svg>
<div class="a" style="left:473.7px;top:149px;width:1.00px;height:13.50px;background:#aaa"></div>
<svg class="tx" width="1024" height="576" viewBox="0 0 1024 576"><text x="477.80" y="158.50" font-size="7.27" fill="#333" textLength="17.50" lengthAdjust="spacingAndGlyphs">17750</text></svg>
<div class="a" style="left:165px;top:162.5px;width:333.00px;height:14.50px;background:#fff"></div>
<div class="a" style="left:165.4px;top:162.8px;width:69.00px;height:14.20px;background:#fff;border:1px solid #444;border-bottom:none;border-radius:3px 3px 0 0;border-width:1.5px 1px 0 1px"></div>
<svg class="tx" width="1024" height="576" viewBox="0 0 1024 576"><text x="168.90" y="171.50" font-size="6.40" fill="#222">Batch Wise Stock</text></svg>
<div class="a" style="left:164.5px;top:177.4px;width:333.70px;height:31.20px;background:#5669a9;border-left:1.5px solid #222;border-top:1px solid #333"></div>
<div class="a" style="left:164.5px;top:208.6px;width:333.70px;height:2.40px;background:#c9cde0"></div>
<div class="a" style="left:164.5px;top:211px;width:333.70px;height:31.60px;background:#5669a9;border-left:1.5px solid #222;border-bottom:1px solid #333"></div>
<svg class="tx" width="1024" height="576" viewBox="0 0 1024 576"><text x="175.60" y="198.00" font-size="10.17" fill="#fff" font-weight="bold" textLength="41.80" lengthAdjust="spacingAndGlyphs">Batch No</text><text x="175.60" y="230.60" font-size="10.17" fill="#fff" font-weight="bold" textLength="19.00" lengthAdjust="spacingAndGlyphs">OPG</text><text x="164.90" y="253.30" font-size="9.59" fill="#333" textLength="52.00" lengthAdjust="spacingAndGlyphs">Stock : .3500</text></svg>
<div class="a" style="left:171.9px;top:329.4px;width:822.50px;height:22.30px;background:#5869a8"></div>
<svg class="tx" width="1024" height="576" viewBox="0 0 1024 576"><text x="172.90" y="338.70" font-size="7.99" fill="#fff" font-weight="bold">Sr.</text><text x="173.00" y="349.40" font-size="7.85" fill="#fff" font-weight="bold" textLength="5.00" lengthAdjust="spacingAndGlyphs">#</text><text x="189.70" y="343.80" font-size="8.14" fill="#fff" font-weight="bold" textLength="34.70" lengthAdjust="spacingAndGlyphs">Products</text><text x="360.70" y="343.80" font-size="8.14" fill="#fff" font-weight="bold" textLength="39.50" lengthAdjust="spacingAndGlyphs">BATCH No</text><text x="419.70" y="343.80" font-size="8.14" fill="#fff" font-weight="bold" textLength="78.40" lengthAdjust="spacingAndGlyphs">Product Description</text><text x="525.40" y="343.80" font-size="8.14" fill="#fff" font-weight="bold" textLength="17.80" lengthAdjust="spacingAndGlyphs">Rate</text><text x="561.90" y="343.80" font-size="8.14" fill="#fff" font-weight="bold" textLength="10.70" lengthAdjust="spacingAndGlyphs">Wt</text><text x="614.70" y="343.80" font-size="8.14" fill="#fff" font-weight="bold" textLength="19.40" lengthAdjust="spacingAndGlyphs">Pcs 1</text><text x="668.40" y="343.80" font-size="8.14" fill="#fff" font-weight="bold" textLength="32.70" lengthAdjust="spacingAndGlyphs">Total Wt</text><text x="741.50" y="343.80" font-size="8.14" fill="#fff" font-weight="bold" textLength="28.40" lengthAdjust="spacingAndGlyphs">Gm Acc</text><text x="794.60" y="343.80" font-size="8.14" fill="#fff" font-weight="bold" textLength="27.90" lengthAdjust="spacingAndGlyphs">Disc. %</text><text x="842.30" y="343.80" font-size="8.14" fill="#fff" font-weight="bold" textLength="39.10" lengthAdjust="spacingAndGlyphs">Disc. Amt.</text><text x="894.30" y="343.80" font-size="8.14" fill="#fff" font-weight="bold" textLength="40.80" lengthAdjust="spacingAndGlyphs">Fixed Disc.</text><text x="951.90" y="343.80" font-size="8.14" fill="#fff" font-weight="bold" textLength="31.80" lengthAdjust="spacingAndGlyphs">Amount</text></svg>
<div class="a" style="left:171.9px;top:351.7px;width:822.50px;height:169.30px;background:#eef0f5"></div>
<div class="a" style="left:171.9px;top:353px;width:15.80px;height:27.50px;background:#13288a"></div>
<div class="a" style="left:189.1px;top:353px;width:161.30px;height:27.50px;background:#13288a"></div>
<div class="a" style="left:351.8px;top:353px;width:57.00px;height:27.50px;background:#13288a"></div>
<div class="a" style="left:411.2px;top:353px;width:95.30px;height:27.50px;background:#13288a"></div>
<div class="a" style="left:509.2px;top:353px;width:50.60px;height:27.50px;background:#13288a"></div>
<div class="a" style="left:561.8px;top:353px;width:50.80px;height:27.50px;background:#13288a"></div>
<div class="a" style="left:614.8px;top:353px;width:51.20px;height:27.50px;background:#13288a"></div>
<div class="a" style="left:668.0px;top:353px;width:60.60px;height:27.50px;background:#13288a"></div>
<div class="a" style="left:730.1px;top:353px;width:51.10px;height:27.50px;background:#13288a"></div>
<div class="a" style="left:783.2px;top:353px;width:51.30px;height:27.50px;background:#13288a"></div>
<div class="a" style="left:836.2px;top:353px;width:51.00px;height:27.50px;background:#13288a"></div>
<div class="a" style="left:889.2px;top:353px;width:51.20px;height:27.50px;background:#13288a"></div>
<div class="a" style="left:942.3px;top:353px;width:52.10px;height:27.50px;background:#13288a"></div>
<svg class="tx" width="1024" height="576" viewBox="0 0 1024 576"><text x="173.80" y="370.30" font-size="8.72" fill="#0b1a5c">1</text></svg>
<div class="a" style="left:189.9px;top:358.9px;width:159.30px;height:15.10px;background:#fff;border:1px solid #cfd3e0;border-radius:3px"></div>
<div class="a" style="left:352px;top:358.9px;width:56.60px;height:15.10px;background:#fff;border:1px solid #cfd3e0;border-radius:3px"></div>
<div class="a" style="left:411.4px;top:358.9px;width:94.90px;height:15.10px;background:#fff;border:1px solid #cfd3e0;border-radius:3px"></div>
<div class="a" style="left:509.4px;top:358.9px;width:50.30px;height:15.10px;background:#fff;border:1px solid #6aa8e8;border-radius:3px;box-shadow:0 0 2px 1px rgba(102,175,233,.8)"></div>
<div class="a" style="left:562.2px;top:358.9px;width:50.30px;height:15.10px;background:#fff;border:1px solid #cfd3e0;border-radius:3px"></div>
<div class="a" style="left:615.5px;top:358.9px;width:50.30px;height:15.10px;background:#fff;border:1px solid #cfd3e0;border-radius:3px"></div>
<div class="a" style="left:668.4px;top:354.3px;width:50.50px;height:14.50px;background:#fff;border:1px solid #cfd3e0;border-radius:3px"></div>
<svg class="tx" width="1024" height="576" viewBox="0 0 1024 576"><text x="670.50" y="364.50" font-size="8.43" fill="#333">0</text><text x="669.00" y="378.00" font-size="8.14" fill="#050a20" textLength="10.00" lengthAdjust="spacingAndGlyphs">KG</text></svg>
<div class="a" style="left:730.6px;top:358.9px;width:50.40px;height:15.10px;background:#fff;border:1px solid #cfd3e0;border-radius:3px"></div>
<div class="a" style="left:783.5px;top:358.9px;width:50.80px;height:15.10px;background:#fff;border:1px solid #cfd3e0;border-radius:3px"></div>
<div class="a" style="left:836.5px;top:358.9px;width:50.50px;height:15.10px;background:#ebebeb;border:1px solid #cfd3e0;border-radius:3px"></div>
<div class="a" style="left:889.8px;top:358.9px;width:50.40px;height:15.10px;background:#fff;border:1px solid #cfd3e0;border-radius:3px"></div>
<div class="a" style="left:942.7px;top:358.9px;width:51.00px;height:15.10px;background:#ebebeb;border:1px solid #cfd3e0;border-radius:3px"></div>
<svg class="tx" width="1024" height="576" viewBox="0 0 1024 576"><text x="191.90" y="369.20" font-size="8.58" fill="#333" textLength="150.00" lengthAdjust="spacingAndGlyphs">P-5058 - Fluorescent Sky Blue - BLUE - 9067</text><text x="510.80" y="369.20" font-size="8.58" fill="#333">5</text></svg>
<div class="a" style="left:514px;top:362.2px;width:0.80px;height:9.20px;background:#111"></div>
<svg class="tx" width="1024" height="576" viewBox="0 0 1024 576"><text x="564.00" y="369.20" font-size="8.58" fill="#4a4a4a">0</text><text x="617.30" y="369.20" font-size="8.58" fill="#4a4a4a">1</text><text x="732.40" y="369.20" font-size="8.58" fill="#4a4a4a">0</text><text x="785.30" y="369.20" font-size="8.58" fill="#4a4a4a">0</text><text x="838.30" y="369.20" font-size="8.58" fill="#4a4a4a" textLength="14.40" lengthAdjust="spacingAndGlyphs">0.00</text><text x="891.60" y="369.20" font-size="8.58" fill="#4a4a4a">0</text><text x="944.50" y="369.20" font-size="8.58" fill="#4a4a4a" textLength="14.40" lengthAdjust="spacingAndGlyphs">5.00</text></svg>
<div class="a" style="left:171.9px;top:382.1px;width:15.80px;height:15.70px;background:#d6dae6"></div>
<div class="a" style="left:189.1px;top:382.1px;width:161.30px;height:15.70px;background:#d6dae6"></div>
<div class="a" style="left:351.8px;top:382.1px;width:57.00px;height:15.70px;background:#d6dae6"></div>
<div class="a" style="left:411.2px;top:382.1px;width:95.30px;height:15.70px;background:#d6dae6"></div>
<div class="a" style="left:509.2px;top:382.1px;width:50.60px;height:15.70px;background:#d6dae6"></div>
<div class="a" style="left:561.8px;top:382.1px;width:50.80px;height:15.70px;background:#d6dae6"></div>
<div class="a" style="left:614.8px;top:382.1px;width:51.20px;height:15.70px;background:#d6dae6"></div>
<div class="a" style="left:668.0px;top:382.1px;width:60.60px;height:15.70px;background:#d6dae6"></div>
<div class="a" style="left:730.1px;top:382.1px;width:51.10px;height:15.70px;background:#d6dae6"></div>
<div class="a" style="left:783.2px;top:382.1px;width:51.30px;height:15.70px;background:#d6dae6"></div>
<div class="a" style="left:836.2px;top:382.1px;width:51.00px;height:15.70px;background:#d6dae6"></div>
<div class="a" style="left:889.2px;top:382.1px;width:51.20px;height:15.70px;background:#d6dae6"></div>
<div class="a" style="left:942.3px;top:382.1px;width:52.10px;height:15.70px;background:#d6dae6"></div>
<svg class="tx" width="1024" height="576" viewBox="0 0 1024 576"><text x="174.00" y="392.20" font-size="8.72" fill="#333">2</text></svg>
<div class="a" style="left:189.9px;top:382.70000000000005px;width:159.30px;height:14.30px;background:#fff;border:1px solid #cfd3e0;border-radius:3px"></div>
<div class="a" style="left:352px;top:382.70000000000005px;width:56.60px;height:14.30px;background:#fff;border:1px solid #cfd3e0;border-radius:3px"></div>
<div class="a" style="left:411.4px;top:382.70000000000005px;width:94.90px;height:14.30px;background:#fff;border:1px solid #cfd3e0;border-radius:3px"></div>
<div class="a" style="left:509.4px;top:382.70000000000005px;width:50.30px;height:14.30px;background:#fff;border:1px solid #cfd3e0;border-radius:3px"></div>
<svg class="tx" width="1024" height="576" viewBox="0 0 1024 576"><text x="511.20" y="392.30" font-size="8.58" fill="#4a4a4a">0</text></svg>
<div class="a" style="left:562.2px;top:382.70000000000005px;width:50.30px;height:14.30px;background:#fff;border:1px solid #cfd3e0;border-radius:3px"></div>
<svg class="tx" width="1024" height="576" viewBox="0 0 1024 576"><text x="564.00" y="392.30" font-size="8.58" fill="#4a4a4a">0</text></svg>
<div class="a" style="left:615.5px;top:382.70000000000005px;width:50.30px;height:14.30px;background:#fff;border:1px solid #cfd3e0;border-radius:3px"></div>
<svg class="tx" width="1024" height="576" viewBox="0 0 1024 576"><text x="617.30" y="392.30" font-size="8.58" fill="#4a4a4a">0</text></svg>
<div class="a" style="left:668.4px;top:382.70000000000005px;width:50.50px;height:14.30px;background:#fff;border:1px solid #cfd3e0;border-radius:3px"></div>
<svg class="tx" width="1024" height="576" viewBox="0 0 1024 576"><text x="670.20" y="392.30" font-size="8.58" fill="#4a4a4a">0</text></svg>
<div class="a" style="left:730.6px;top:382.70000000000005px;width:50.40px;height:14.30px;background:#fff;border:1px solid #cfd3e0;border-radius:3px"></div>
<svg class="tx" width="1024" height="576" viewBox="0 0 1024 576"><text x="732.40" y="392.30" font-size="8.58" fill="#4a4a4a">0</text></svg>
<div class="a" style="left:783.5px;top:382.70000000000005px;width:50.80px;height:14.30px;background:#fff;border:1px solid #cfd3e0;border-radius:3px"></div>
<svg class="tx" width="1024" height="576" viewBox="0 0 1024 576"><text x="785.30" y="392.30" font-size="8.58" fill="#4a4a4a">0</text></svg>
<div class="a" style="left:836.5px;top:382.70000000000005px;width:50.50px;height:14.30px;background:#ebebeb;border:1px solid #cfd3e0;border-radius:3px"></div>
<svg class="tx" width="1024" height="576" viewBox="0 0 1024 576"><text x="838.30" y="392.30" font-size="8.58" fill="#4a4a4a" textLength="14.40" lengthAdjust="spacingAndGlyphs">0.00</text></svg>
<div class="a" style="left:889.8px;top:382.70000000000005px;width:50.40px;height:14.30px;background:#fff;border:1px solid #cfd3e0;border-radius:3px"></div>
<svg class="tx" width="1024" height="576" viewBox="0 0 1024 576"><text x="891.60" y="392.30" font-size="8.58" fill="#4a4a4a">0</text></svg>
<div class="a" style="left:942.7px;top:382.70000000000005px;width:51.00px;height:14.30px;background:#ebebeb;border:1px solid #cfd3e0;border-radius:3px"></div>
<svg class="tx" width="1024" height="576" viewBox="0 0 1024 576"><text x="944.50" y="392.30" font-size="8.58" fill="#4a4a4a" textLength="14.40" lengthAdjust="spacingAndGlyphs">0.00</text></svg>
<div class="a" style="left:171.9px;top:399.5px;width:15.80px;height:15.70px;background:#d6dae6"></div>
<div class="a" style="left:189.1px;top:399.5px;width:161.30px;height:15.70px;background:#d6dae6"></div>
<div class="a" style="left:351.8px;top:399.5px;width:57.00px;height:15.70px;background:#d6dae6"></div>
<div class="a" style="left:411.2px;top:399.5px;width:95.30px;height:15.70px;background:#d6dae6"></div>
<div class="a" style="left:509.2px;top:399.5px;width:50.60px;height:15.70px;background:#d6dae6"></div>
<div class="a" style="left:561.8px;top:399.5px;width:50.80px;height:15.70px;background:#d6dae6"></div>
<div class="a" style="left:614.8px;top:399.5px;width:51.20px;height:15.70px;background:#d6dae6"></div>
<div class="a" style="left:668.0px;top:399.5px;width:60.60px;height:15.70px;background:#d6dae6"></div>
<div class="a" style="left:730.1px;top:399.5px;width:51.10px;height:15.70px;background:#d6dae6"></div>
<div class="a" style="left:783.2px;top:399.5px;width:51.30px;height:15.70px;background:#d6dae6"></div>
<div class="a" style="left:836.2px;top:399.5px;width:51.00px;height:15.70px;background:#d6dae6"></div>
<div class="a" style="left:889.2px;top:399.5px;width:51.20px;height:15.70px;background:#d6dae6"></div>
<div class="a" style="left:942.3px;top:399.5px;width:52.10px;height:15.70px;background:#d6dae6"></div>
<svg class="tx" width="1024" height="576" viewBox="0 0 1024 576"><text x="174.00" y="409.60" font-size="8.72" fill="#333">3</text></svg>
<div class="a" style="left:189.9px;top:400.1px;width:159.30px;height:14.30px;background:#fff;border:1px solid #cfd3e0;border-radius:3px"></div>
<div class="a" style="left:352px;top:400.1px;width:56.60px;height:14.30px;background:#fff;border:1px solid #cfd3e0;border-radius:3px"></div>
<div class="a" style="left:411.4px;top:400.1px;width:94.90px;height:14.30px;background:#fff;border:1px solid #cfd3e0;border-radius:3px"></div>
<div class="a" style="left:509.4px;top:400.1px;width:50.30px;height:14.30px;background:#fff;border:1px solid #cfd3e0;border-radius:3px"></div>
<svg class="tx" width="1024" height="576" viewBox="0 0 1024 576"><text x="511.20" y="409.70" font-size="8.58" fill="#4a4a4a">0</text></svg>
<div class="a" style="left:562.2px;top:400.1px;width:50.30px;height:14.30px;background:#fff;border:1px solid #cfd3e0;border-radius:3px"></div>
<svg class="tx" width="1024" height="576" viewBox="0 0 1024 576"><text x="564.00" y="409.70" font-size="8.58" fill="#4a4a4a">0</text></svg>
<div class="a" style="left:615.5px;top:400.1px;width:50.30px;height:14.30px;background:#fff;border:1px solid #cfd3e0;border-radius:3px"></div>
<svg class="tx" width="1024" height="576" viewBox="0 0 1024 576"><text x="617.30" y="409.70" font-size="8.58" fill="#4a4a4a">0</text></svg>
<div class="a" style="left:668.4px;top:400.1px;width:50.50px;height:14.30px;background:#fff;border:1px solid #cfd3e0;border-radius:3px"></div>
<svg class="tx" width="1024" height="576" viewBox="0 0 1024 576"><text x="670.20" y="409.70" font-size="8.58" fill="#4a4a4a">0</text></svg>
<div class="a" style="left:730.6px;top:400.1px;width:50.40px;height:14.30px;background:#fff;border:1px solid #cfd3e0;border-radius:3px"></div>
<svg class="tx" width="1024" height="576" viewBox="0 0 1024 576"><text x="732.40" y="409.70" font-size="8.58" fill="#4a4a4a">0</text></svg>
<div class="a" style="left:783.5px;top:400.1px;width:50.80px;height:14.30px;background:#fff;border:1px solid #cfd3e0;border-radius:3px"></div>
<svg class="tx" width="1024" height="576" viewBox="0 0 1024 576"><text x="785.30" y="409.70" font-size="8.58" fill="#4a4a4a">0</text></svg>
<div class="a" style="left:836.5px;top:400.1px;width:50.50px;height:14.30px;background:#ebebeb;border:1px solid #cfd3e0;border-radius:3px"></div>
<svg class="tx" width="1024" height="576" viewBox="0 0 1024 576"><text x="838.30" y="409.70" font-size="8.58" fill="#4a4a4a" textLength="14.40" lengthAdjust="spacingAndGlyphs">0.00</text></svg>
<div class="a" style="left:889.8px;top:400.1px;width:50.40px;height:14.30px;background:#fff;border:1px solid #cfd3e0;border-radius:3px"></div>
<svg class="tx" width="1024" height="576" viewBox="0 0 1024 576"><text x="891.60" y="409.70" font-size="8.58" fill="#4a4a4a">0</text></svg>
<div class="a" style="left:942.7px;top:400.1px;width:51.00px;height:14.30px;background:#ebebeb;border:1px solid #cfd3e0;border-radius:3px"></div>
<svg class="tx" width="1024" height="576" viewBox="0 0 1024 576"><text x="944.50" y="409.70" font-size="8.58" fill="#4a4a4a" textLength="14.40" lengthAdjust="spacingAndGlyphs">0.00</text></svg>
<div class="a" style="left:171.9px;top:416.90000000000003px;width:15.80px;height:15.70px;background:#d6dae6"></div>
<div class="a" style="left:189.1px;top:416.90000000000003px;width:161.30px;height:15.70px;background:#d6dae6"></div>
<div class="a" style="left:351.8px;top:416.90000000000003px;width:57.00px;height:15.70px;background:#d6dae6"></div>
<div class="a" style="left:411.2px;top:416.90000000000003px;width:95.30px;height:15.70px;background:#d6dae6"></div>
<div class="a" style="left:509.2px;top:416.90000000000003px;width:50.60px;height:15.70px;background:#d6dae6"></div>
<div class="a" style="left:561.8px;top:416.90000000000003px;width:50.80px;height:15.70px;background:#d6dae6"></div>
<div class="a" style="left:614.8px;top:416.90000000000003px;width:51.20px;height:15.70px;background:#d6dae6"></div>
<div class="a" style="left:668.0px;top:416.90000000000003px;width:60.60px;height:15.70px;background:#d6dae6"></div>
<div class="a" style="left:730.1px;top:416.90000000000003px;width:51.10px;height:15.70px;background:#d6dae6"></div>
<div class="a" style="left:783.2px;top:416.90000000000003px;width:51.30px;height:15.70px;background:#d6dae6"></div>
<div class="a" style="left:836.2px;top:416.90000000000003px;width:51.00px;height:15.70px;background:#d6dae6"></div>
<div class="a" style="left:889.2px;top:416.90000000000003px;width:51.20px;height:15.70px;background:#d6dae6"></div>
<div class="a" style="left:942.3px;top:416.90000000000003px;width:52.10px;height:15.70px;background:#d6dae6"></div>
<svg class="tx" width="1024" height="576" viewBox="0 0 1024 576"><text x="174.00" y="427.00" font-size="8.72" fill="#333">4</text></svg>
<div class="a" style="left:189.9px;top:417.50000000000006px;width:159.30px;height:14.30px;background:#fff;border:1px solid #cfd3e0;border-radius:3px"></div>
<div class="a" style="left:352px;top:417.50000000000006px;width:56.60px;height:14.30px;background:#fff;border:1px solid #cfd3e0;border-radius:3px"></div>
<div class="a" style="left:411.4px;top:417.50000000000006px;width:94.90px;height:14.30px;background:#fff;border:1px solid #cfd3e0;border-radius:3px"></div>
<div class="a" style="left:509.4px;top:417.50000000000006px;width:50.30px;height:14.30px;background:#fff;border:1px solid #cfd3e0;border-radius:3px"></div>
<svg class="tx" width="1024" height="576" viewBox="0 0 1024 576"><text x="511.20" y="427.10" font-size="8.58" fill="#4a4a4a">0</text></svg>
<div class="a" style="left:562.2px;top:417.50000000000006px;width:50.30px;height:14.30px;background:#fff;border:1px solid #cfd3e0;border-radius:3px"></div>
<svg class="tx" width="1024" height="576" viewBox="0 0 1024 576"><text x="564.00" y="427.10" font-size="8.58" fill="#4a4a4a">0</text></svg>
<div class="a" style="left:615.5px;top:417.50000000000006px;width:50.30px;height:14.30px;background:#fff;border:1px solid #cfd3e0;border-radius:3px"></div>
<svg class="tx" width="1024" height="576" viewBox="0 0 1024 576"><text x="617.30" y="427.10" font-size="8.58" fill="#4a4a4a">0</text></svg>
<div class="a" style="left:668.4px;top:417.50000000000006px;width:50.50px;height:14.30px;background:#fff;border:1px solid #cfd3e0;border-radius:3px"></div>
<svg class="tx" width="1024" height="576" viewBox="0 0 1024 576"><text x="670.20" y="427.10" font-size="8.58" fill="#4a4a4a">0</text></svg>
<div class="a" style="left:730.6px;top:417.50000000000006px;width:50.40px;height:14.30px;background:#fff;border:1px solid #cfd3e0;border-radius:3px"></div>
<svg class="tx" width="1024" height="576" viewBox="0 0 1024 576"><text x="732.40" y="427.10" font-size="8.58" fill="#4a4a4a">0</text></svg>
<div class="a" style="left:783.5px;top:417.50000000000006px;width:50.80px;height:14.30px;background:#fff;border:1px solid #cfd3e0;border-radius:3px"></div>
<svg class="tx" width="1024" height="576" viewBox="0 0 1024 576"><text x="785.30" y="427.10" font-size="8.58" fill="#4a4a4a">0</text></svg>
<div class="a" style="left:836.5px;top:417.50000000000006px;width:50.50px;height:14.30px;background:#ebebeb;border:1px solid #cfd3e0;border-radius:3px"></div>
<svg class="tx" width="1024" height="576" viewBox="0 0 1024 576"><text x="838.30" y="427.10" font-size="8.58" fill="#4a4a4a" textLength="14.40" lengthAdjust="spacingAndGlyphs">0.00</text></svg>
<div class="a" style="left:889.8px;top:417.50000000000006px;width:50.40px;height:14.30px;background:#fff;border:1px solid #cfd3e0;border-radius:3px"></div>
<svg class="tx" width="1024" height="576" viewBox="0 0 1024 576"><text x="891.60" y="427.10" font-size="8.58" fill="#4a4a4a">0</text></svg>
<div class="a" style="left:942.7px;top:417.50000000000006px;width:51.00px;height:14.30px;background:#ebebeb;border:1px solid #cfd3e0;border-radius:3px"></div>
<svg class="tx" width="1024" height="576" viewBox="0 0 1024 576"><text x="944.50" y="427.10" font-size="8.58" fill="#4a4a4a" textLength="14.40" lengthAdjust="spacingAndGlyphs">0.00</text></svg>
<div class="a" style="left:171.9px;top:434.3px;width:15.80px;height:15.70px;background:#d6dae6"></div>
<div class="a" style="left:189.1px;top:434.3px;width:161.30px;height:15.70px;background:#d6dae6"></div>
<div class="a" style="left:351.8px;top:434.3px;width:57.00px;height:15.70px;background:#d6dae6"></div>
<div class="a" style="left:411.2px;top:434.3px;width:95.30px;height:15.70px;background:#d6dae6"></div>
<div class="a" style="left:509.2px;top:434.3px;width:50.60px;height:15.70px;background:#d6dae6"></div>
<div class="a" style="left:561.8px;top:434.3px;width:50.80px;height:15.70px;background:#d6dae6"></div>
<div class="a" style="left:614.8px;top:434.3px;width:51.20px;height:15.70px;background:#d6dae6"></div>
<div class="a" style="left:668.0px;top:434.3px;width:60.60px;height:15.70px;background:#d6dae6"></div>
<div class="a" style="left:730.1px;top:434.3px;width:51.10px;height:15.70px;background:#d6dae6"></div>
<div class="a" style="left:783.2px;top:434.3px;width:51.30px;height:15.70px;background:#d6dae6"></div>
<div class="a" style="left:836.2px;top:434.3px;width:51.00px;height:15.70px;background:#d6dae6"></div>
<div class="a" style="left:889.2px;top:434.3px;width:51.20px;height:15.70px;background:#d6dae6"></div>
<div class="a" style="left:942.3px;top:434.3px;width:52.10px;height:15.70px;background:#d6dae6"></div>
<svg class="tx" width="1024" height="576" viewBox="0 0 1024 576"><text x="174.00" y="444.40" font-size="8.72" fill="#333">5</text></svg>
<div class="a" style="left:189.9px;top:434.90000000000003px;width:159.30px;height:14.30px;background:#fff;border:1px solid #cfd3e0;border-radius:3px"></div>
<div class="a" style="left:352px;top:434.90000000000003px;width:56.60px;height:14.30px;background:#fff;border:1px solid #cfd3e0;border-radius:3px"></div>
<div class="a" style="left:411.4px;top:434.90000000000003px;width:94.90px;height:14.30px;background:#fff;border:1px solid #cfd3e0;border-radius:3px"></div>
<div class="a" style="left:509.4px;top:434.90000000000003px;width:50.30px;height:14.30px;background:#fff;border:1px solid #cfd3e0;border-radius:3px"></div>
<svg class="tx" width="1024" height="576" viewBox="0 0 1024 576"><text x="511.20" y="444.50" font-size="8.58" fill="#4a4a4a">0</text></svg>
<div class="a" style="left:562.2px;top:434.90000000000003px;width:50.30px;height:14.30px;background:#fff;border:1px solid #cfd3e0;border-radius:3px"></div>
<svg class="tx" width="1024" height="576" viewBox="0 0 1024 576"><text x="564.00" y="444.50" font-size="8.58" fill="#4a4a4a">0</text></svg>
<div class="a" style="left:615.5px;top:434.90000000000003px;width:50.30px;height:14.30px;background:#fff;border:1px solid #cfd3e0;border-radius:3px"></div>
<svg class="tx" width="1024" height="576" viewBox="0 0 1024 576"><text x="617.30" y="444.50" font-size="8.58" fill="#4a4a4a">0</text></svg>
<div class="a" style="left:668.4px;top:434.90000000000003px;width:50.50px;height:14.30px;background:#fff;border:1px solid #cfd3e0;border-radius:3px"></div>
<svg class="tx" width="1024" height="576" viewBox="0 0 1024 576"><text x="670.20" y="444.50" font-size="8.58" fill="#4a4a4a">0</text></svg>
<div class="a" style="left:730.6px;top:434.90000000000003px;width:50.40px;height:14.30px;background:#fff;border:1px solid #cfd3e0;border-radius:3px"></div>
<svg class="tx" width="1024" height="576" viewBox="0 0 1024 576"><text x="732.40" y="444.50" font-size="8.58" fill="#4a4a4a">0</text></svg>
<div class="a" style="left:783.5px;top:434.90000000000003px;width:50.80px;height:14.30px;background:#fff;border:1px solid #cfd3e0;border-radius:3px"></div>
<svg class="tx" width="1024" height="576" viewBox="0 0 1024 576"><text x="785.30" y="444.50" font-size="8.58" fill="#4a4a4a">0</text></svg>
<div class="a" style="left:836.5px;top:434.90000000000003px;width:50.50px;height:14.30px;background:#ebebeb;border:1px solid #cfd3e0;border-radius:3px"></div>
<svg class="tx" width="1024" height="576" viewBox="0 0 1024 576"><text x="838.30" y="444.50" font-size="8.58" fill="#4a4a4a" textLength="14.40" lengthAdjust="spacingAndGlyphs">0.00</text></svg>
<div class="a" style="left:889.8px;top:434.90000000000003px;width:50.40px;height:14.30px;background:#fff;border:1px solid #cfd3e0;border-radius:3px"></div>
<svg class="tx" width="1024" height="576" viewBox="0 0 1024 576"><text x="891.60" y="444.50" font-size="8.58" fill="#4a4a4a">0</text></svg>
<div class="a" style="left:942.7px;top:434.90000000000003px;width:51.00px;height:14.30px;background:#ebebeb;border:1px solid #cfd3e0;border-radius:3px"></div>
<svg class="tx" width="1024" height="576" viewBox="0 0 1024 576"><text x="944.50" y="444.50" font-size="8.58" fill="#4a4a4a" textLength="14.40" lengthAdjust="spacingAndGlyphs">0.00</text></svg>
<div class="a" style="left:171.9px;top:451.70000000000005px;width:15.80px;height:15.70px;background:#d6dae6"></div>
<div class="a" style="left:189.1px;top:451.70000000000005px;width:161.30px;height:15.70px;background:#d6dae6"></div>
<div class="a" style="left:351.8px;top:451.70000000000005px;width:57.00px;height:15.70px;background:#d6dae6"></div>
<div class="a" style="left:411.2px;top:451.70000000000005px;width:95.30px;height:15.70px;background:#d6dae6"></div>
<div class="a" style="left:509.2px;top:451.70000000000005px;width:50.60px;height:15.70px;background:#d6dae6"></div>
<div class="a" style="left:561.8px;top:451.70000000000005px;width:50.80px;height:15.70px;background:#d6dae6"></div>
<div class="a" style="left:614.8px;top:451.70000000000005px;width:51.20px;height:15.70px;background:#d6dae6"></div>
<div class="a" style="left:668.0px;top:451.70000000000005px;width:60.60px;height:15.70px;background:#d6dae6"></div>
<div class="a" style="left:730.1px;top:451.70000000000005px;width:51.10px;height:15.70px;background:#d6dae6"></div>
<div class="a" style="left:783.2px;top:451.70000000000005px;width:51.30px;height:15.70px;background:#d6dae6"></div>
<div class="a" style="left:836.2px;top:451.70000000000005px;width:51.00px;height:15.70px;background:#d6dae6"></div>
<div class="a" style="left:889.2px;top:451.70000000000005px;width:51.20px;height:15.70px;background:#d6dae6"></div>
<div class="a" style="left:942.3px;top:451.70000000000005px;width:52.10px;height:15.70px;background:#d6dae6"></div>
<svg class="tx" width="1024" height="576" viewBox="0 0 1024 576"><text x="174.00" y="461.80" font-size="8.72" fill="#333">6</text></svg>
<div class="a" style="left:189.9px;top:452.30000000000007px;width:159.30px;height:14.30px;background:#fff;border:1px solid #cfd3e0;border-radius:3px"></div>
<div class="a" style="left:352px;top:452.30000000000007px;width:56.60px;height:14.30px;background:#fff;border:1px solid #cfd3e0;border-radius:3px"></div>
<div class="a" style="left:411.4px;top:452.30000000000007px;width:94.90px;height:14.30px;background:#fff;border:1px solid #cfd3e0;border-radius:3px"></div>
<div class="a" style="left:509.4px;top:452.30000000000007px;width:50.30px;height:14.30px;background:#fff;border:1px solid #cfd3e0;border-radius:3px"></div>
<svg class="tx" width="1024" height="576" viewBox="0 0 1024 576"><text x="511.20" y="461.90" font-size="8.58" fill="#4a4a4a">0</text></svg>
<div class="a" style="left:562.2px;top:452.30000000000007px;width:50.30px;height:14.30px;background:#fff;border:1px solid #cfd3e0;border-radius:3px"></div>
<svg class="tx" width="1024" height="576" viewBox="0 0 1024 576"><text x="564.00" y="461.90" font-size="8.58" fill="#4a4a4a">0</text></svg>
<div class="a" style="left:615.5px;top:452.30000000000007px;width:50.30px;height:14.30px;background:#fff;border:1px solid #cfd3e0;border-radius:3px"></div>
<svg class="tx" width="1024" height="576" viewBox="0 0 1024 576"><text x="617.30" y="461.90" font-size="8.58" fill="#4a4a4a">0</text></svg>
<div class="a" style="left:668.4px;top:452.30000000000007px;width:50.50px;height:14.30px;background:#fff;border:1px solid #cfd3e0;border-radius:3px"></div>
<svg class="tx" width="1024" height="576" viewBox="0 0 1024 576"><text x="670.20" y="461.90" font-size="8.58" fill="#4a4a4a">0</text></svg>
<div class="a" style="left:730.6px;top:452.30000000000007px;width:50.40px;height:14.30px;background:#fff;border:1px solid #cfd3e0;border-radius:3px"></div>
<svg class="tx" width="1024" height="576" viewBox="0 0 1024 576"><text x="732.40" y="461.90" font-size="8.58" fill="#4a4a4a">0</text></svg>
<div class="a" style="left:783.5px;top:452.30000000000007px;width:50.80px;height:14.30px;background:#fff;border:1px solid #cfd3e0;border-radius:3px"></div>
<svg class="tx" width="1024" height="576" viewBox="0 0 1024 576"><text x="785.30" y="461.90" font-size="8.58" fill="#4a4a4a">0</text></svg>
<div class="a" style="left:836.5px;top:452.30000000000007px;width:50.50px;height:14.30px;background:#ebebeb;border:1px solid #cfd3e0;border-radius:3px"></div>
<svg class="tx" width="1024" height="576" viewBox="0 0 1024 576"><text x="838.30" y="461.90" font-size="8.58" fill="#4a4a4a" textLength="14.40" lengthAdjust="spacingAndGlyphs">0.00</text></svg>
<div class="a" style="left:889.8px;top:452.30000000000007px;width:50.40px;height:14.30px;background:#fff;border:1px solid #cfd3e0;border-radius:3px"></div>
<svg class="tx" width="1024" height="576" viewBox="0 0 1024 576"><text x="891.60" y="461.90" font-size="8.58" fill="#4a4a4a">0</text></svg>
<div class="a" style="left:942.7px;top:452.30000000000007px;width:51.00px;height:14.30px;background:#ebebeb;border:1px solid #cfd3e0;border-radius:3px"></div>
<svg class="tx" width="1024" height="576" viewBox="0 0 1024 576"><text x="944.50" y="461.90" font-size="8.58" fill="#4a4a4a" textLength="14.40" lengthAdjust="spacingAndGlyphs">0.00</text></svg>
<div class="a" style="left:171.9px;top:469.1px;width:15.80px;height:15.70px;background:#d6dae6"></div>
<div class="a" style="left:189.1px;top:469.1px;width:161.30px;height:15.70px;background:#d6dae6"></div>
<div class="a" style="left:351.8px;top:469.1px;width:57.00px;height:15.70px;background:#d6dae6"></div>
<div class="a" style="left:411.2px;top:469.1px;width:95.30px;height:15.70px;background:#d6dae6"></div>
<div class="a" style="left:509.2px;top:469.1px;width:50.60px;height:15.70px;background:#d6dae6"></div>
<div class="a" style="left:561.8px;top:469.1px;width:50.80px;height:15.70px;background:#d6dae6"></div>
<div class="a" style="left:614.8px;top:469.1px;width:51.20px;height:15.70px;background:#d6dae6"></div>
<div class="a" style="left:668.0px;top:469.1px;width:60.60px;height:15.70px;background:#d6dae6"></div>
<div class="a" style="left:730.1px;top:469.1px;width:51.10px;height:15.70px;background:#d6dae6"></div>
<div class="a" style="left:783.2px;top:469.1px;width:51.30px;height:15.70px;background:#d6dae6"></div>
<div class="a" style="left:836.2px;top:469.1px;width:51.00px;height:15.70px;background:#d6dae6"></div>
<div class="a" style="left:889.2px;top:469.1px;width:51.20px;height:15.70px;background:#d6dae6"></div>
<div class="a" style="left:942.3px;top:469.1px;width:52.10px;height:15.70px;background:#d6dae6"></div>
<svg class="tx" width="1024" height="576" viewBox="0 0 1024 576"><text x="174.00" y="479.20" font-size="8.72" fill="#333">7</text></svg>
<div class="a" style="left:189.9px;top:469.70000000000005px;width:159.30px;height:14.30px;background:#fff;border:1px solid #cfd3e0;border-radius:3px"></div>
<div class="a" style="left:352px;top:469.70000000000005px;width:56.60px;height:14.30px;background:#fff;border:1px solid #cfd3e0;border-radius:3px"></div>
<div class="a" style="left:411.4px;top:469.70000000000005px;width:94.90px;height:14.30px;background:#fff;border:1px solid #cfd3e0;border-radius:3px"></div>
<div class="a" style="left:509.4px;top:469.70000000000005px;width:50.30px;height:14.30px;background:#fff;border:1px solid #cfd3e0;border-radius:3px"></div>
<svg class="tx" width="1024" height="576" viewBox="0 0 1024 576"><text x="511.20" y="479.30" font-size="8.58" fill="#4a4a4a">0</text></svg>
<div class="a" style="left:562.2px;top:469.70000000000005px;width:50.30px;height:14.30px;background:#fff;border:1px solid #cfd3e0;border-radius:3px"></div>
<svg class="tx" width="1024" height="576" viewBox="0 0 1024 576"><text x="564.00" y="479.30" font-size="8.58" fill="#4a4a4a">0</text></svg>
<div class="a" style="left:615.5px;top:469.70000000000005px;width:50.30px;height:14.30px;background:#fff;border:1px solid #cfd3e0;border-radius:3px"></div>
<svg class="tx" width="1024" height="576" viewBox="0 0 1024 576"><text x="617.30" y="479.30" font-size="8.58" fill="#4a4a4a">0</text></svg>
<div class="a" style="left:668.4px;top:469.70000000000005px;width:50.50px;height:14.30px;background:#fff;border:1px solid #cfd3e0;border-radius:3px"></div>
<svg class="tx" width="1024" height="576" viewBox="0 0 1024 576"><text x="670.20" y="479.30" font-size="8.58" fill="#4a4a4a">0</text></svg>
<div class="a" style="left:730.6px;top:469.70000000000005px;width:50.40px;height:14.30px;background:#fff;border:1px solid #cfd3e0;border-radius:3px"></div>
<svg class="tx" width="1024" height="576" viewBox="0 0 1024 576"><text x="732.40" y="479.30" font-size="8.58" fill="#4a4a4a">0</text></svg>
<div class="a" style="left:783.5px;top:469.70000000000005px;width:50.80px;height:14.30px;background:#fff;border:1px solid #cfd3e0;border-radius:3px"></div>
<svg class="tx" width="1024" height="576" viewBox="0 0 1024 576"><text x="785.30" y="479.30" font-size="8.58" fill="#4a4a4a">0</text></svg>
<div class="a" style="left:836.5px;top:469.70000000000005px;width:50.50px;height:14.30px;background:#ebebeb;border:1px solid #cfd3e0;border-radius:3px"></div>
<svg class="tx" width="1024" height="576" viewBox="0 0 1024 576"><text x="838.30" y="479.30" font-size="8.58" fill="#4a4a4a" textLength="14.40" lengthAdjust="spacingAndGlyphs">0.00</text></svg>
<div class="a" style="left:889.8px;top:469.70000000000005px;width:50.40px;height:14.30px;background:#fff;border:1px solid #cfd3e0;border-radius:3px"></div>
<svg class="tx" width="1024" height="576" viewBox="0 0 1024 576"><text x="891.60" y="479.30" font-size="8.58" fill="#4a4a4a">0</text></svg>
<div class="a" style="left:942.7px;top:469.70000000000005px;width:51.00px;height:14.30px;background:#ebebeb;border:1px solid #cfd3e0;border-radius:3px"></div>
<svg class="tx" width="1024" height="576" viewBox="0 0 1024 576"><text x="944.50" y="479.30" font-size="8.58" fill="#4a4a4a" textLength="14.40" lengthAdjust="spacingAndGlyphs">0.00</text></svg>
<div class="a" style="left:171.9px;top:486.5px;width:15.80px;height:15.70px;background:#d6dae6"></div>
<div class="a" style="left:189.1px;top:486.5px;width:161.30px;height:15.70px;background:#d6dae6"></div>
<div class="a" style="left:351.8px;top:486.5px;width:57.00px;height:15.70px;background:#d6dae6"></div>
<div class="a" style="left:411.2px;top:486.5px;width:95.30px;height:15.70px;background:#d6dae6"></div>
<div class="a" style="left:509.2px;top:486.5px;width:50.60px;height:15.70px;background:#d6dae6"></div>
<div class="a" style="left:561.8px;top:486.5px;width:50.80px;height:15.70px;background:#d6dae6"></div>
<div class="a" style="left:614.8px;top:486.5px;width:51.20px;height:15.70px;background:#d6dae6"></div>
<div class="a" style="left:668.0px;top:486.5px;width:60.60px;height:15.70px;background:#d6dae6"></div>
<div class="a" style="left:730.1px;top:486.5px;width:51.10px;height:15.70px;background:#d6dae6"></div>
<div class="a" style="left:783.2px;top:486.5px;width:51.30px;height:15.70px;background:#d6dae6"></div>
<div class="a" style="left:836.2px;top:486.5px;width:51.00px;height:15.70px;background:#d6dae6"></div>
<div class="a" style="left:889.2px;top:486.5px;width:51.20px;height:15.70px;background:#d6dae6"></div>
<div class="a" style="left:942.3px;top:486.5px;width:52.10px;height:15.70px;background:#d6dae6"></div>
<svg class="tx" width="1024" height="576" viewBox="0 0 1024 576"><text x="174.00" y="496.60" font-size="8.72" fill="#333">8</text></svg>
<div class="a" style="left:189.9px;top:487.1px;width:159.30px;height:14.30px;background:#fff;border:1px solid #cfd3e0;border-radius:3px"></div>
<div class="a" style="left:352px;top:487.1px;width:56.60px;height:14.30px;background:#fff;border:1px solid #cfd3e0;border-radius:3px"></div>
<div class="a" style="left:411.4px;top:487.1px;width:94.90px;height:14.30px;background:#fff;border:1px solid #cfd3e0;border-radius:3px"></div>
<div class="a" style="left:509.4px;top:487.1px;width:50.30px;height:14.30px;background:#fff;border:1px solid #cfd3e0;border-radius:3px"></div>
<svg class="tx" width="1024" height="576" viewBox="0 0 1024 576"><text x="511.20" y="496.70" font-size="8.58" fill="#4a4a4a">0</text></svg>
<div class="a" style="left:562.2px;top:487.1px;width:50.30px;height:14.30px;background:#fff;border:1px solid #cfd3e0;border-radius:3px"></div>
<svg class="tx" width="1024" height="576" viewBox="0 0 1024 576"><text x="564.00" y="496.70" font-size="8.58" fill="#4a4a4a">0</text></svg>
<div class="a" style="left:615.5px;top:487.1px;width:50.30px;height:14.30px;background:#fff;border:1px solid #cfd3e0;border-radius:3px"></div>
<svg class="tx" width="1024" height="576" viewBox="0 0 1024 576"><text x="617.30" y="496.70" font-size="8.58" fill="#4a4a4a">0</text></svg>
<div class="a" style="left:668.4px;top:487.1px;width:50.50px;height:14.30px;background:#fff;border:1px solid #cfd3e0;border-radius:3px"></div>
<svg class="tx" width="1024" height="576" viewBox="0 0 1024 576"><text x="670.20" y="496.70" font-size="8.58" fill="#4a4a4a">0</text></svg>
<div class="a" style="left:730.6px;top:487.1px;width:50.40px;height:14.30px;background:#fff;border:1px solid #cfd3e0;border-radius:3px"></div>
<svg class="tx" width="1024" height="576" viewBox="0 0 1024 576"><text x="732.40" y="496.70" font-size="8.58" fill="#4a4a4a">0</text></svg>
<div class="a" style="left:783.5px;top:487.1px;width:50.80px;height:14.30px;background:#fff;border:1px solid #cfd3e0;border-radius:3px"></div>
<svg class="tx" width="1024" height="576" viewBox="0 0 1024 576"><text x="785.30" y="496.70" font-size="8.58" fill="#4a4a4a">0</text></svg>
<div class="a" style="left:836.5px;top:487.1px;width:50.50px;height:14.30px;background:#ebebeb;border:1px solid #cfd3e0;border-radius:3px"></div>
<svg class="tx" width="1024" height="576" viewBox="0 0 1024 576"><text x="838.30" y="496.70" font-size="8.58" fill="#4a4a4a" textLength="14.40" lengthAdjust="spacingAndGlyphs">0.00</text></svg>
<div class="a" style="left:889.8px;top:487.1px;width:50.40px;height:14.30px;background:#fff;border:1px solid #cfd3e0;border-radius:3px"></div>
<svg class="tx" width="1024" height="576" viewBox="0 0 1024 576"><text x="891.60" y="496.70" font-size="8.58" fill="#4a4a4a">0</text></svg>
<div class="a" style="left:942.7px;top:487.1px;width:51.00px;height:14.30px;background:#ebebeb;border:1px solid #cfd3e0;border-radius:3px"></div>
<svg class="tx" width="1024" height="576" viewBox="0 0 1024 576"><text x="944.50" y="496.70" font-size="8.58" fill="#4a4a4a" textLength="14.40" lengthAdjust="spacingAndGlyphs">0.00</text></svg>
<div class="a" style="left:171.9px;top:503.9px;width:15.80px;height:15.70px;background:#d6dae6"></div>
<div class="a" style="left:189.1px;top:503.9px;width:161.30px;height:15.70px;background:#d6dae6"></div>
<div class="a" style="left:351.8px;top:503.9px;width:57.00px;height:15.70px;background:#d6dae6"></div>
<div class="a" style="left:411.2px;top:503.9px;width:95.30px;height:15.70px;background:#d6dae6"></div>
<div class="a" style="left:509.2px;top:503.9px;width:50.60px;height:15.70px;background:#d6dae6"></div>
<div class="a" style="left:561.8px;top:503.9px;width:50.80px;height:15.70px;background:#d6dae6"></div>
<div class="a" style="left:614.8px;top:503.9px;width:51.20px;height:15.70px;background:#d6dae6"></div>
<div class="a" style="left:668.0px;top:503.9px;width:60.60px;height:15.70px;background:#d6dae6"></div>
<div class="a" style="left:730.1px;top:503.9px;width:51.10px;height:15.70px;background:#d6dae6"></div>
<div class="a" style="left:783.2px;top:503.9px;width:51.30px;height:15.70px;background:#d6dae6"></div>
<div class="a" style="left:836.2px;top:503.9px;width:51.00px;height:15.70px;background:#d6dae6"></div>
<div class="a" style="left:889.2px;top:503.9px;width:51.20px;height:15.70px;background:#d6dae6"></div>
<div class="a" style="left:942.3px;top:503.9px;width:52.10px;height:15.70px;background:#d6dae6"></div>
<svg class="tx" width="1024" height="576" viewBox="0 0 1024 576"><text x="174.00" y="514.00" font-size="8.72" fill="#333">9</text></svg>
<div class="a" style="left:189.9px;top:504.5px;width:159.30px;height:14.30px;background:#fff;border:1px solid #cfd3e0;border-radius:3px"></div>
<div class="a" style="left:352px;top:504.5px;width:56.60px;height:14.30px;background:#fff;border:1px solid #cfd3e0;border-radius:3px"></div>
<div class="a" style="left:411.4px;top:504.5px;width:94.90px;height:14.30px;background:#fff;border:1px solid #cfd3e0;border-radius:3px"></div>
<div class="a" style="left:509.4px;top:504.5px;width:50.30px;height:14.30px;background:#fff;border:1px solid #cfd3e0;border-radius:3px"></div>
<svg class="tx" width="1024" height="576" viewBox="0 0 1024 576"><text x="511.20" y="514.10" font-size="8.58" fill="#4a4a4a">0</text></svg>
<div class="a" style="left:562.2px;top:504.5px;width:50.30px;height:14.30px;background:#fff;border:1px solid #cfd3e0;border-radius:3px"></div>
<svg class="tx" width="1024" height="576" viewBox="0 0 1024 576"><text x="564.00" y="514.10" font-size="8.58" fill="#4a4a4a">0</text></svg>
<div class="a" style="left:615.5px;top:504.5px;width:50.30px;height:14.30px;background:#fff;border:1px solid #cfd3e0;border-radius:3px"></div>
<svg class="tx" width="1024" height="576" viewBox="0 0 1024 576"><text x="617.30" y="514.10" font-size="8.58" fill="#4a4a4a">0</text></svg>
<div class="a" style="left:668.4px;top:504.5px;width:50.50px;height:14.30px;background:#fff;border:1px solid #cfd3e0;border-radius:3px"></div>
<svg class="tx" width="1024" height="576" viewBox="0 0 1024 576"><text x="670.20" y="514.10" font-size="8.58" fill="#4a4a4a">0</text></svg>
<div class="a" style="left:730.6px;top:504.5px;width:50.40px;height:14.30px;background:#fff;border:1px solid #cfd3e0;border-radius:3px"></div>
<svg class="tx" width="1024" height="576" viewBox="0 0 1024 576"><text x="732.40" y="514.10" font-size="8.58" fill="#4a4a4a">0</text></svg>
<div class="a" style="left:783.5px;top:504.5px;width:50.80px;height:14.30px;background:#fff;border:1px solid #cfd3e0;border-radius:3px"></div>
<svg class="tx" width="1024" height="576" viewBox="0 0 1024 576"><text x="785.30" y="514.10" font-size="8.58" fill="#4a4a4a">0</text></svg>
<div class="a" style="left:836.5px;top:504.5px;width:50.50px;height:14.30px;background:#ebebeb;border:1px solid #cfd3e0;border-radius:3px"></div>
<svg class="tx" width="1024" height="576" viewBox="0 0 1024 576"><text x="838.30" y="514.10" font-size="8.58" fill="#4a4a4a" textLength="14.40" lengthAdjust="spacingAndGlyphs">0.00</text></svg>
<div class="a" style="left:889.8px;top:504.5px;width:50.40px;height:14.30px;background:#fff;border:1px solid #cfd3e0;border-radius:3px"></div>
<svg class="tx" width="1024" height="576" viewBox="0 0 1024 576"><text x="891.60" y="514.10" font-size="8.58" fill="#4a4a4a">0</text></svg>
<div class="a" style="left:942.7px;top:504.5px;width:51.00px;height:14.30px;background:#ebebeb;border:1px solid #cfd3e0;border-radius:3px"></div>
<svg class="tx" width="1024" height="576" viewBox="0 0 1024 576"><text x="944.50" y="514.10" font-size="8.58" fill="#4a4a4a" textLength="14.40" lengthAdjust="spacingAndGlyphs">0.00</text></svg>
<div class="a" style="left:13px;top:526.2px;width:80.25px;height:17.70px;background:#03a9f4;border-radius:2px 2px 0 0"></div>
<svg class="tx" width="1024" height="576" viewBox="0 0 1024 576"><text x="20.75" y="539.50" font-size="9.59" fill="#fff" textLength="65.50" lengthAdjust="spacingAndGlyphs">Show/hide Form</text></svg>
<div class="a" style="left:95.5px;top:526.2px;width:36.25px;height:17.70px;background:#ffc107;border-radius:2px 2px 0 0"></div>
<svg class="tx" width="1024" height="576" viewBox="0 0 1024 576"><text x="102.50" y="539.50" font-size="9.59" fill="#fff" textLength="20.75" lengthAdjust="spacingAndGlyphs">Copy</text></svg>
<div class="a" style="left:133.25px;top:526.2px;width:88.50px;height:17.70px;background:#03a9f4;border-radius:2px 2px 0 0"></div>
<svg class="tx" width="1024" height="576" viewBox="0 0 1024 576"><text x="141.25" y="539.50" font-size="9.59" fill="#fff" textLength="73.25" lengthAdjust="spacingAndGlyphs">Set Default Values</text></svg>
<div class="a" style="left:224px;top:526.2px;width:47.80px;height:17.70px;background:#03a9f4;border-radius:2px 2px 0 0"></div>
<svg class="tx" width="1024" height="576" viewBox="0 0 1024 576"><text x="232.00" y="539.50" font-size="9.59" fill="#fff" textLength="32.00" lengthAdjust="spacingAndGlyphs">Settings</text></svg>
<div class="a" style="left:274.3px;top:526.2px;width:58.00px;height:17.70px;background:#03a9f4;border-radius:2px 2px 0 0"></div>
<svg class="tx" width="1024" height="576" viewBox="0 0 1024 576"><text x="281.70" y="539.50" font-size="9.59" fill="#fff" textLength="43.60" lengthAdjust="spacingAndGlyphs">Customize</text></svg>
<div class="a" style="left:473px;top:524.8px;width:35.80px;height:19.10px;background:#8bc34a;border-radius:2px 2px 0 0"></div>
<svg class="tx" width="1024" height="576" viewBox="0 0 1024 576"><text x="481.70" y="538.50" font-size="8.72" fill="#fff" textLength="19.30" lengthAdjust="spacingAndGlyphs">Save</text></svg>
<div class="a" style="left:834.75px;top:526.2px;width:53.25px;height:17.70px;background:#e9503f;border-radius:2px 2px 0 0"></div>
<svg class="tx" width="1024" height="576" viewBox="0 0 1024 576"><text x="842.50" y="539.50" font-size="9.59" fill="#fff" textLength="38.00" lengthAdjust="spacingAndGlyphs">Data Grid</text></svg>
<div class="a" style="left:890.5px;top:526.2px;width:35.00px;height:17.70px;background:#8fa3b1;border-radius:2px 2px 0 0"></div>
<svg class="tx" width="1024" height="576" viewBox="0 0 1024 576"><text x="898.00" y="539.50" font-size="9.59" fill="#fff" textLength="20.75" lengthAdjust="spacingAndGlyphs">Form</text></svg>
<div class="a" style="left:928.5px;top:526.2px;width:55.00px;height:17.70px;background:#8bc34a;border-radius:2px 2px 0 0"></div>
<svg class="tx" width="1024" height="576" viewBox="0 0 1024 576"><text x="936.00" y="539.50" font-size="9.59" fill="#fff" textLength="39.50" lengthAdjust="spacingAndGlyphs">Child Grid</text></svg>
<div class="a" style="left:985.5px;top:526.2px;width:29.25px;height:17.70px;background:#e9503f;border-radius:2px 2px 0 0"></div>
<svg class="tx" width="1024" height="576" viewBox="0 0 1024 576"><text x="993.00" y="539.50" font-size="9.59" fill="#fff" textLength="14.50" lengthAdjust="spacingAndGlyphs">Top</text></svg>
<div class="a" style="left:8px;top:544px;width:1010.00px;height:1.00px;background:#efefef"></div>
<svg class="tx" width="1024" height="576" viewBox="0 0 1024 576"><text x="835.00" y="528.00" font-size="11.92" fill="rgba(160,160,160,.55)" textLength="99.00" lengthAdjust="spacingAndGlyphs">Activate Windows</text><text x="834.50" y="539.50" font-size="9.59" fill="rgba(150,150,150,.6)" textLength="131.00" lengthAdjust="spacingAndGlyphs">Go to Settings to activate Windows.</text></svg>
<div class="a" style="left:31px;top:550px;width:184.00px;height:26.00px;background:#f0f0f0"></div>
<svg style="left:10px;top:557px" width="12" height="12" viewBox="0 0 12 12"><path d="M0 1.7L4.9 1V5.6H0Z M5.6 0.9L12 0V5.6H5.6Z M0 6.3H4.9V11L0 10.3Z M5.6 6.3H12V12L5.6 11.1Z" fill="#fff"/></svg>
<svg style="left:37px;top:556px" width="12" height="13" viewBox="0 0 12 13"><circle cx="7" cy="5" r="3.8" fill="none" stroke="#222" stroke-width="1.1"/><path d="M4.3 7.8L0.8 11.8" stroke="#222" stroke-width="1.2"/></svg>
<svg class="tx" width="1024" height="576" viewBox="0 0 1024 576"><text x="57.00" y="567.30" font-size="10.17" fill="#222" textLength="81.00" lengthAdjust="spacingAndGlyphs">Type here to search</text></svg>
<svg style="left:155px;top:548px" width="60" height="28" viewBox="0 0 60 28">
<defs><linearGradient id="hill" x1="0" y1="0" x2="0" y2="1"><stop offset="0" stop-color="#d9662a"/><stop offset="1" stop-color="#f2a23c"/></linearGradient></defs>
<path d="M22 12 Q28 4 36 7 Q42 2 50 6 Q54 9 52 13 Z" fill="url(#hill)"/>
<path d="M12 23 Q14 16 24 15 L44 13 Q56 15 58 20 Q54 26 40 26 L14 26 Z" fill="#6aa84f"/>
<path d="M17 12 Q24 9 36 12 Q30 14 26 15" fill="#f0b848"/>
<path d="M18 28 Q30 24 36 20 Q34 17 26 18 Q22 17 25 13 Q30 11 38 12" fill="none" stroke="#d8ceb8" stroke-width="2.4"/>
<g fill="#4a3020"><rect x="13.6" y="16" width="1" height="5"/><rect x="18.6" y="20" width="1" height="6"/><rect x="41.6" y="16" width="1" height="4"/><rect x="50.6" y="13" width="1" height="5"/><rect x="44.6" y="21" width="1" height="4"/></g>
<circle cx="14" cy="13" r="3.6" fill="#d9622e"/><circle cx="21" cy="9.5" r="2.8" fill="#d9622e"/>
<circle cx="19" cy="18" r="4" fill="#f0a53a"/>
<circle cx="42" cy="11" r="2.6" fill="#f3c060"/>
<circle cx="51.5" cy="11" r="3.8" fill="#dd6a30"/>
<circle cx="45" cy="18" r="4.2" fill="#f2a93a"/>
</svg>
<svg style="left:224px;top:557px" width="13" height="11" viewBox="0 0 13 11"><path d="M0 0.5H9M0 10.5H9M1.5 3H7.5V8H1.5Z" fill="none" stroke="#fff" stroke-width="1"/><path d="M11 0V11" stroke="#fff" stroke-width="1"/><circle cx="11" cy="4" r="1.2" fill="#fff"/></svg>
<svg style="left:255px;top:555px" width="16" height="16" viewBox="0 0 16 16"><defs><linearGradient id="ed" x1="0" y1="0" x2="0" y2="1"><stop offset="0" stop-color="#2a9ae8"/><stop offset="1" stop-color="#0c55a8"/></linearGradient><linearGradient id="eg" x1="0" y1="0" x2="1" y2=".6"><stop offset="0" stop-color="#2cc0f0"/><stop offset="1" stop-color="#5ee070"/></linearGradient></defs>
<circle cx="8" cy="8" r="7.8" fill="url(#ed)"/><path d="M0.3 8.5A7.7 7.7 0 0 1 15.7 8.5Q15.6 11.6 12.6 11.8Q9.6 11.8 9.9 9.2Q9.4 6.8 6.4 6.9Q2.4 7.3 0.3 10.5Z" fill="url(#eg)"/><circle cx="8.6" cy="9.4" r="1.7" fill="#2b3a4a"/></svg>
<svg style="left:286.5px;top:557px" width="16" height="13" viewBox="0 0 16 13"><path d="M0 0.5H5.5L7 2H16V13H0Z" fill="#e8a317"/><rect x="0" y="2.8" width="16" height="10.2" fill="#ffd35c"/><path d="M4 7H12V11.5H4Z" fill="#3b95e0"/><rect x="6.3" y="8.6" width="3.4" height="1.6" fill="#ffd35c"/></svg>
<svg style="left:317.5px;top:555px" width="16" height="16" viewBox="0 0 16 16"><path d="M5 4V2.5A3 3 0 0 1 11 2.5V4" fill="none" stroke="#3ba5e8" stroke-width="1.3"/><rect x="0.5" y="4" width="15" height="12" rx="2" fill="#f3f3f3"/><rect x="5" y="7" width="2.7" height="2.7" fill="#f25022"/><rect x="8.3" y="7" width="2.7" height="2.7" fill="#7fba00"/><rect x="5" y="10.3" width="2.7" height="2.7" fill="#00a4ef"/><rect x="8.3" y="10.3" width="2.7" height="2.7" fill="#ffb900"/></svg>
<svg style="left:349px;top:555px" width="17" height="16" viewBox="0 0 17 16"><rect x="6" y="1" width="11" height="14" rx="1" fill="#28a8ea"/><path d="M6 8L17 5V15H6Z" fill="#1b7fcf"/><rect x="0" y="3.5" width="9.5" height="9.5" rx="1" fill="#0f64b8"/><ellipse cx="4.75" cy="8.25" rx="2.4" ry="2.9" fill="none" stroke="#fff" stroke-width="1.3"/></svg>
<svg style="left:380.5px;top:555px" width="16" height="16" viewBox="0 0 16 16">
<circle cx="8" cy="8" r="8" fill="#db4437"/>
<path d="M8 8L1.1 4A8 8 0 0 0 8 16Z" fill="#0f9d58"/><path d="M8 8L8 16A8 8 0 0 0 14.9 4Z" fill="#ffcd40"/><path d="M8 8L14.9 4H8Z" fill="#db4437"/>
<circle cx="8" cy="8" r="3.7" fill="#fff"/><circle cx="8" cy="8" r="2.9" fill="#4285f4"/></svg>
<div class="a" style="left:375.8px;top:574px;width:24.90px;height:2.00px;background:#8cc3f0"></div>
<div class="a" style="left:403.9px;top:550px;width:31.00px;height:26.00px;background:#5a5a58"></div>
<div class="a" style="left:403.9px;top:574px;width:31.00px;height:2.00px;background:#8cc3f0"></div>
<svg style="left:412px;top:555px" width="16" height="16" viewBox="0 0 16 16"><rect x="1" y="1" width="11" height="8" fill="#2a53c9"/><rect x="2" y="2" width="9" height="6" fill="#7fb2ff"/><rect x="4" y="10" width="6" height="2" fill="#ddd"/><circle cx="11.5" cy="11.5" r="4" fill="#3a9a3a" stroke="#ddd" stroke-width=".7"/><path d="M9.5 12.5L13.5 10.5" stroke="#fff" stroke-width="1"/></svg>
<div class="a" style="left:803.6px;top:556.8px;width:13.00px;height:13.00px;background:radial-gradient(circle at 40% 35%,#ffc531,#f39c12 70%,#e67e00);border-radius:50%"></div>
<svg class="tx" width="1024" height="576" viewBox="0 0 1024 576"><text x="823.10" y="567.20" font-size="10.47" fill="#fff" textLength="18.30" lengthAdjust="spacingAndGlyphs">27°C</text><text x="847.60" y="567.20" font-size="10.47" fill="#fff" textLength="24.00" lengthAdjust="spacingAndGlyphs">Sunny</text></svg>
<svg style="left:887px;top:559px" width="9" height="6" viewBox="0 0 9 6"><path d="M0.6 5.4L4.5 1L8.4 5.4" fill="none" stroke="#fff" stroke-width="1.1"/></svg>
<svg style="left:901.5px;top:557px" width="12" height="12" viewBox="0 0 12 12"><rect x="0.5" y="1" width="10" height="8" fill="none" stroke="#fff" stroke-width="1"/><rect x="2.5" y="3" width="4" height="3" fill="none" stroke="#fff" stroke-width=".8"/><circle cx="9.5" cy="9.5" r="2.3" fill="#f39c12"/></svg>
<svg style="left:919px;top:558px" width="9" height="9" viewBox="0 0 9 9"><path d="M1 8.5A7.5 7.5 0 0 1 8.5 1M3 8.5A5.5 5.5 0 0 1 8.5 3M5 8.5A3.5 3.5 0 0 1 8.5 5" fill="none" stroke="#fff" stroke-width=".9"/><circle cx="7.8" cy="7.8" r=".9" fill="#fff"/></svg>
<svg style="left:932px;top:558px" width="11" height="10" viewBox="0 0 11 10"><path d="M0.5 3.5H2.5L5.5 0.8V9.2L2.5 6.5H0.5Z" fill="none" stroke="#fff" stroke-width=".9"/><path d="M7 3Q8 5 7 7M8.6 1.8Q10.4 5 8.6 8.2" fill="none" stroke="#fff" stroke-width=".9"/></svg>
<svg class="tx" width="1024" height="576" viewBox="0 0 1024 576"><text x="952.20" y="559.90" font-size="8.43" fill="#fff" textLength="29.80" lengthAdjust="spacingAndGlyphs">11:34 am</text><text x="950.00" y="570.80" font-size="8.43" fill="#fff" textLength="36.00" lengthAdjust="spacingAndGlyphs">15/11/2025</text></svg>
<svg style="left:996.5px;top:555px" width="17" height="18" viewBox="0 0 17 18"><path d="M0.5 0.5H13.5V9.5H6L3 12.5V9.5H0.5Z" fill="#fff"/><path d="M3 3H11M3 5H11M3 7H9" stroke="#3b3b39" stroke-width=".9"/><circle cx="11.5" cy="12" r="5" fill="#3b3b39" stroke="#fff" stroke-width=".9"/><text x="11.5" y="14.8" font-size="7.5" text-anchor="middle" fill="#fff" font-family="Liberation Sans">1</text></svg>
<div class="a" style="left:927.5px;top:72.3px;width:22.00px;height:22.00px;background:radial-gradient(circle at 50% 45%,#ffffff 0%,#f4f4f4 50%,#d0d0d0 100%);border-radius:50%;border:1px solid #e8e8e8"></div>
<svg style="left:928.5px;top:73.3px" width="20" height="20" viewBox="0 0 41 41"><g opacity=".95"><circle cx="16.0" cy="6.8" r="1.1" fill="#ed5565"/><circle cx="24.1" cy="25.7" r="0.8" fill="#ed5565"/><circle cx="19.4" cy="4.7" r="0.8" fill="#ec87c0"/><circle cx="7.8" cy="17.1" r="1.3" fill="#e94e77"/><circle cx="35.4" cy="17.4" r="0.9" fill="#4fc1e9"/><circle cx="15.0" cy="6.6" r="0.8" fill="#fc6e51"/><circle cx="23.7" cy="7.7" r="0.8" fill="#ed5565"/><circle cx="22.5" cy="22.4" r="1.0" fill="#ffce54"/><circle cx="17.2" cy="9.2" r="0.8" fill="#4fc1e9"/><circle cx="8.5" cy="10.5" r="1.0" fill="#48cfad"/><circle cx="28.6" cy="10.2" r="1.3" fill="#ed5565"/><circle cx="21.9" cy="7.1" r="0.9" fill="#ffce54"/><circle cx="8.4" cy="17.0" r="1.2" fill="#48cfad"/><circle cx="8.9" cy="9.7" r="1.1" fill="#ed5565"/><circle cx="7.9" cy="20.5" r="1.1" fill="#ffce54"/><circle cx="6.7" cy="14.5" r="0.8" fill="#ed5565"/><circle cx="21.3" cy="8.5" r="0.9" fill="#4fc1e9"/><circle cx="18.3" cy="25.9" r="1.0" fill="#ac92ec"/><circle cx="19.9" cy="16.7" r="1.2" fill="#5d9cec"/><circle cx="10.7" cy="7.4" r="0.8" fill="#4fc1e9"/><circle cx="11.7" cy="10.0" r="0.8" fill="#5d9cec"/><circle cx="17.4" cy="17.2" r="1.1" fill="#5d9cec"/><circle cx="35.5" cy="19.4" r="1.1" fill="#ffce54"/><circle cx="33.1" cy="22.9" r="0.9" fill="#ec87c0"/><circle cx="19.7" cy="5.7" r="1.1" fill="#ed5565"/><circle cx="9.1" cy="12.1" r="0.7" fill="#4fc1e9"/><circle cx="25.0" cy="6.7" r="0.9" fill="#48cfad"/><circle cx="29.2" cy="21.5" r="1.0" fill="#ac92ec"/><circle cx="22.0" cy="8.1" r="1.3" fill="#48cfad"/><circle cx="10.5" cy="16.6" r="0.7" fill="#5d9cec"/><circle cx="15.2" cy="19.1" r="0.8" fill="#fc6e51"/><circle cx="22.1" cy="25.7" r="0.9" fill="#4fc1e9"/><circle cx="22.5" cy="22.5" r="0.9" fill="#4fc1e9"/><circle cx="25.0" cy="22.7" r="1.2" fill="#4fc1e9"/><circle cx="31.0" cy="23.5" r="1.1" fill="#4fc1e9"/><circle cx="12.2" cy="15.3" r="1.1" fill="#a0d468"/><circle cx="30.5" cy="14.8" r="0.8" fill="#e94e77"/><circle cx="35.7" cy="14.2" r="1.3" fill="#48cfad"/><circle cx="35.6" cy="12.1" r="0.8" fill="#4fc1e9"/><circle cx="16.7" cy="19.1" r="0.8" fill="#ec87c0"/><circle cx="30.3" cy="21.8" r="1.0" fill="#ac92ec"/><circle cx="20.4" cy="21.6" r="0.8" fill="#ac92ec"/><circle cx="11.3" cy="6.2" r="0.8" fill="#ffce54"/><circle cx="31.0" cy="6.7" r="1.2" fill="#ffce54"/><circle cx="22.3" cy="26.3" r="1.0" fill="#4fc1e9"/><circle cx="31.6" cy="8.3" r="0.9" fill="#fc6e51"/><circle cx="21.5" cy="22.1" r="0.9" fill="#5d9cec"/><circle cx="19.0" cy="6.3" r="1.2" fill="#48cfad"/><circle cx="33.8" cy="19.6" r="1.2" fill="#5d9cec"/><circle cx="19.0" cy="25.9" r="1.0" fill="#5d9cec"/><circle cx="10.7" cy="15.8" r="1.2" fill="#ac92ec"/><circle cx="24.9" cy="22.4" r="0.8" fill="#ac92ec"/><circle cx="20.7" cy="21.1" r="1.0" fill="#48cfad"/><circle cx="20.0" cy="3.7" r="1.2" fill="#ed5565"/><circle cx="22.5" cy="15.0" r="1.1" fill="#fc6e51"/><circle cx="12.3" cy="14.2" r="0.9" fill="#ec87c0"/><circle cx="19.7" cy="4.8" r="0.8" fill="#ed5565"/><circle cx="12.6" cy="10.6" r="0.8" fill="#ac92ec"/><circle cx="35.1" cy="19.1" r="0.9" fill="#fc6e51"/><circle cx="18.3" cy="15.2" r="1.2" fill="#ac92ec"/><circle cx="8.9" cy="12.1" r="0.9" fill="#ffce54"/><circle cx="19.7" cy="3.5" r="0.9" fill="#e94e77"/><circle cx="13.1" cy="24.9" r="0.8" fill="#fc6e51"/><circle cx="14.4" cy="6.2" r="1.0" fill="#fc6e51"/><circle cx="30.8" cy="7.6" r="1.2" fill="#fc6e51"/><circle cx="35.1" cy="18.9" r="1.2" fill="#ed5565"/><circle cx="24.9" cy="8.6" r="0.9" fill="#ed5565"/><circle cx="34.7" cy="9.7" r="0.8" fill="#5d9cec"/><circle cx="22.9" cy="25.2" r="1.3" fill="#fc6e51"/><circle cx="16.6" cy="23.8" r="1.1" fill="#ac92ec"/></g><path d="M19.2 37 L20.2 27 L21 22 L22.2 27 L23.4 37 Z" fill="#3e2a1e"/><path d="M21 24 C16 21 10.5 17 11.5 12 C12.5 7.5 19 7.5 20.5 11.5 C21.5 14.5 18.5 16.5 17 14.5 M21 24 C25 23.5 31 21.5 31.5 17 C32 13 26.5 12 25 15.5 C24.2 18 27 19 28 17 M21.3 24 C21 20 21.5 17 23.5 16" fill="none" stroke="#3e2a1e" stroke-width="1.4"/><path d="M17 37.2 Q21 35 25.5 37.2 Z" fill="#3e2a1e"/></svg>
</body></html>
